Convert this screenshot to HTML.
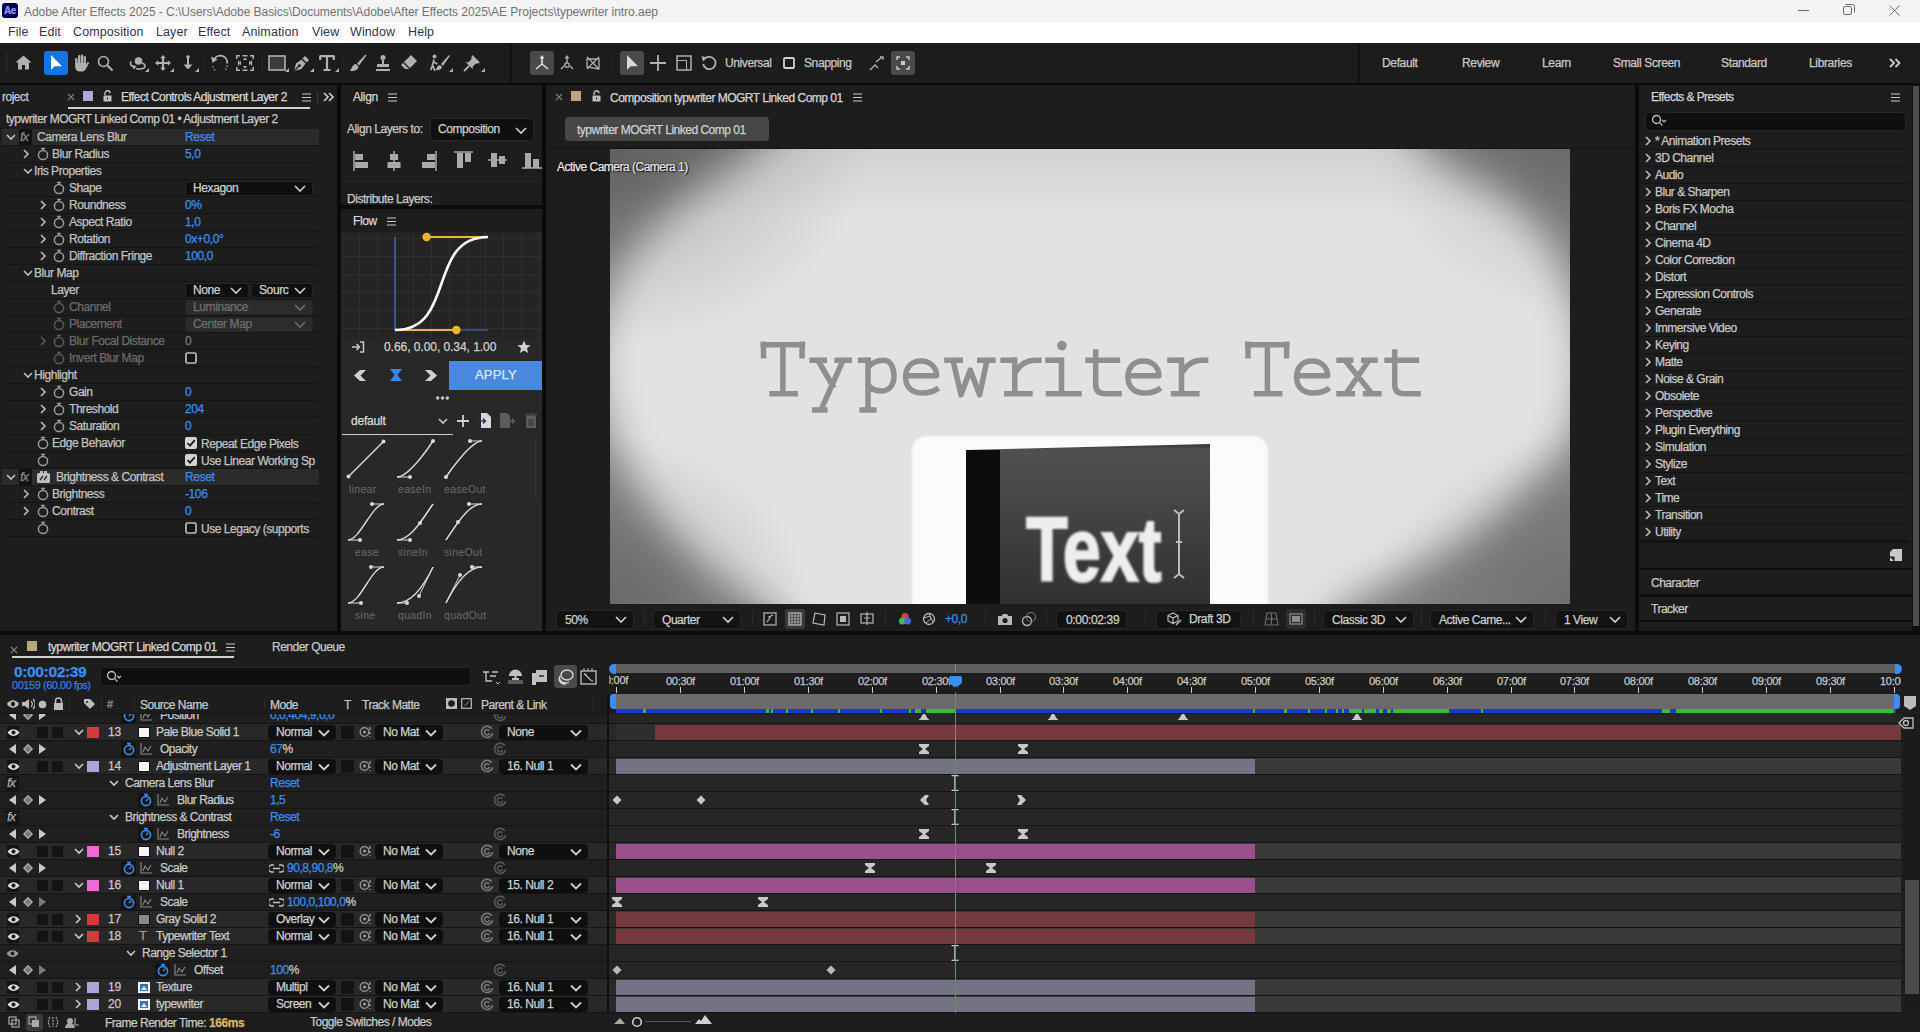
<!DOCTYPE html>
<html><head><meta charset="utf-8">
<style>
*{margin:0;padding:0;box-sizing:border-box}
html,body{width:1920px;height:1032px;overflow:hidden;background:#0b0b0b;font-family:"Liberation Sans",sans-serif;font-size:12px;color:#c4c4c4}
.a{position:absolute;display:block}
.t{position:absolute;white-space:nowrap;-webkit-text-stroke:0.25px currentColor}
</style></head><body>
<div class="a" style="left:0px;top:0px;width:1920px;height:22px;background:#f3f3f3;"></div>
<div class="a" style="left:2px;top:3px;width:16px;height:15px;background:#00005b;border-radius:3px"></div>
<div class="t" style="left:4px;top:5px;font-size:10px;line-height:12px;color:#9999ff;letter-spacing:-0.4px;font-weight:bold;">Ae</div>
<div class="t" style="left:24px;top:5px;font-size:12px;line-height:14px;color:#727272;letter-spacing:-0.04px;-webkit-text-stroke:0;">Adobe After Effects 2025 - C:\Users\Adobe Basics\Documents\Adobe\After Effects 2025\AE Projects\typewriter intro.aep</div>
<svg class="a" style="left:1798px;top:9px;" width="12" height="3" viewBox="0 0 12 3"><path d="M0 1.5H11" stroke="#6a6a6a" stroke-width="1"/></svg>
<svg class="a" style="left:1843px;top:4px;" width="12" height="12" viewBox="0 0 12 12"><rect x="0.5" y="2.5" width="8" height="8" rx="1.5" fill="none" stroke="#6a6a6a"/><path d="M2.5 0.5H9.5A2 2 0 0 1 11.5 2.5V8.5" fill="none" stroke="#6a6a6a"/></svg>
<svg class="a" style="left:1889px;top:5px;" width="11" height="11" viewBox="0 0 11 11"><path d="M0.5 0.5L10.5 10.5M10.5 0.5L0.5 10.5" stroke="#6a6a6a" stroke-width="1"/></svg>
<div class="a" style="left:0px;top:22px;width:1920px;height:21px;background:#ffffff;"></div>
<div class="t" style="left:8px;top:25px;font-size:12.5px;line-height:15px;color:#33334a;letter-spacing:0.1px;-webkit-text-stroke:0;">File</div>
<div class="t" style="left:39px;top:25px;font-size:12.5px;line-height:15px;color:#33334a;letter-spacing:0.1px;-webkit-text-stroke:0;">Edit</div>
<div class="t" style="left:73px;top:25px;font-size:12.5px;line-height:15px;color:#33334a;letter-spacing:0.1px;-webkit-text-stroke:0;">Composition</div>
<div class="t" style="left:156px;top:25px;font-size:12.5px;line-height:15px;color:#33334a;letter-spacing:0.1px;-webkit-text-stroke:0;">Layer</div>
<div class="t" style="left:198px;top:25px;font-size:12.5px;line-height:15px;color:#33334a;letter-spacing:0.1px;-webkit-text-stroke:0;">Effect</div>
<div class="t" style="left:242px;top:25px;font-size:12.5px;line-height:15px;color:#33334a;letter-spacing:0.1px;-webkit-text-stroke:0;">Animation</div>
<div class="t" style="left:312px;top:25px;font-size:12.5px;line-height:15px;color:#33334a;letter-spacing:0.1px;-webkit-text-stroke:0;">View</div>
<div class="t" style="left:350px;top:25px;font-size:12.5px;line-height:15px;color:#33334a;letter-spacing:0.1px;-webkit-text-stroke:0;">Window</div>
<div class="t" style="left:408px;top:25px;font-size:12.5px;line-height:15px;color:#33334a;letter-spacing:0.1px;-webkit-text-stroke:0;">Help</div>
<div class="a" style="left:0px;top:43px;width:1920px;height:40px;background:#1c1c1c;"></div>
<svg class="a" style="left:5px;top:52px;" width="3" height="22" viewBox="0 0 3 22"><path d="M1.5 0V22" stroke="#3a3a3a" stroke-width="1.5" stroke-dasharray="1 1"/></svg>
<svg class="a" style="left:15px;top:55px;" width="17" height="15" viewBox="0 0 17 15"><path d="M8.5 0.5L0.5 7.5H3V14.5H7V10H10V14.5H14V7.5H16.5Z" fill="#b0b0b0"/></svg>
<div class="a" style="left:44px;top:51px;width:24px;height:24px;background:#1473e6;border-radius:3px"></div>
<svg class="a" style="left:49px;top:54px;" width="14" height="17" viewBox="0 0 14 17"><path d="M2 1L2 16L5.6 12.2L13 12.2Z" fill="#ffffff"/></svg>
<svg class="a" style="left:72px;top:54px;" width="17" height="18" viewBox="0 0 17 18"><rect x="3.2" y="4" width="2.3" height="8" rx="1.15" fill="#b0b0b0"/><rect x="6" y="1" width="2.3" height="10" rx="1.15" fill="#b0b0b0"/><rect x="8.8" y="0.5" width="2.3" height="10" rx="1.15" fill="#b0b0b0"/><rect x="11.6" y="2" width="2.3" height="9" rx="1.15" fill="#b0b0b0"/><path d="M3.2 9H13.9V10.5L15.5 8A1.2 1.2 0 0 1 17 9.3L13.5 15.5C12.5 17 11.5 17.5 9.5 17.5H8C5 17.5 3.2 15.5 3.2 13Z" fill="#b0b0b0"/></svg>
<svg class="a" style="left:97px;top:55px;" width="17" height="17" viewBox="0 0 17 17"><circle cx="6.5" cy="6.5" r="5" fill="none" stroke="#b0b0b0" stroke-width="1.6"/><path d="M10.3 10.3L15.5 15.5" stroke="#b0b0b0" stroke-width="2"/></svg>
<div class="a" style="left:122px;top:54px;width:1px;height:18px;background:#242424;"></div>
<svg class="a" style="left:128px;top:55px;" width="20" height="16" viewBox="0 0 20 16"><circle cx="10.5" cy="6" r="3.8" fill="#b0b0b0"/><path d="M5.5 11.5C2 10.5 1.5 8 3.5 6.5M8 13.5C12 15 17 13.5 17 11C17 9.5 15.5 8.5 14 8" fill="none" stroke="#b0b0b0" stroke-width="1.6"/><path d="M3 10L8.5 11L6 14.5Z" fill="#b0b0b0"/></svg>
<svg class="a" style="left:145px;top:68px;" width="4" height="4" viewBox="0 0 4 4"><path d="M4 0V4H0Z" fill="#b0b0b0"/></svg>
<svg class="a" style="left:155px;top:55px;" width="16" height="16" viewBox="0 0 16 16"><path d="M8 2V14M2 8H14" stroke="#b0b0b0" stroke-width="2.2"/><path d="M8 0L5.2 3.2H10.8ZM8 16L5.2 12.8H10.8ZM0 8L3.2 5.2V10.8ZM16 8L12.8 5.2V10.8Z" fill="#b0b0b0"/></svg>
<svg class="a" style="left:170px;top:68px;" width="4" height="4" viewBox="0 0 4 4"><path d="M4 0V4H0Z" fill="#b0b0b0"/></svg>
<svg class="a" style="left:183px;top:55px;" width="10" height="16" viewBox="0 0 10 16"><circle cx="5" cy="2" r="1.8" fill="#b0b0b0"/><path d="M5 2V11" stroke="#b0b0b0" stroke-width="2"/><path d="M0.5 9.5H9.5L5 14.5Z" fill="#b0b0b0"/></svg>
<svg class="a" style="left:195px;top:68px;" width="4" height="4" viewBox="0 0 4 4"><path d="M4 0V4H0Z" fill="#b0b0b0"/></svg>
<div class="a" style="left:204px;top:54px;width:1px;height:18px;background:#242424;"></div>
<svg class="a" style="left:210px;top:54px;" width="19" height="17" viewBox="0 0 19 17"><path d="M4 5.5A7 7 0 0 1 17.2 9.5" fill="none" stroke="#b0b0b0" stroke-width="1.8"/><path d="M17 11.5A7 7 0 0 1 3 11.5" fill="none" stroke="#b0b0b0" stroke-width="1.4" stroke-dasharray="1.3 2"/><path d="M1 2.5L2.5 9L7.5 5.5Z" fill="#b0b0b0"/></svg>
<svg class="a" style="left:236px;top:55px;" width="18" height="16" viewBox="0 0 18 16"><path d="M0.8 4V0.8H4M14 0.8H17.2V4M17.2 12V15.2H14M4 15.2H0.8V12M6.5 0.8H11.5M6.5 15.2H11.5" fill="none" stroke="#b0b0b0" stroke-width="1.5"/><path d="M9 2.5L6.8 5H11.2ZM9 13.5L6.8 11H11.2ZM2.5 8L5 5.8V10.2ZM15.5 8L13 5.8V10.2Z" fill="#b0b0b0"/><path d="M2.5 5.5V10.5M15.5 5.5V10.5" stroke="#b0b0b0" stroke-width="1.2"/></svg>
<div class="a" style="left:262px;top:54px;width:1px;height:18px;background:#242424;"></div>
<svg class="a" style="left:268px;top:55px;" width="18" height="16" viewBox="0 0 18 16"><rect x="1" y="1" width="16" height="14" fill="#3a3a3a" stroke="#b0b0b0" stroke-width="1.6"/></svg>
<svg class="a" style="left:285px;top:68px;" width="4" height="4" viewBox="0 0 4 4"><path d="M4 0V4H0Z" fill="#b0b0b0"/></svg>
<svg class="a" style="left:293px;top:54px;" width="18" height="18" viewBox="0 0 18 18"><path d="M1 17L3 9.5L8.5 5.5L12.5 9.5L8.5 15Z" fill="#b0b0b0"/><path d="M9.5 4.5L12 2L16 6L13.5 8.5Z" fill="#b0b0b0"/><path d="M1.5 16.5L6 12" stroke="#1c1c1c" stroke-width="1.2"/><circle cx="6.5" cy="11.5" r="1.3" fill="#1c1c1c"/></svg>
<svg class="a" style="left:310px;top:68px;" width="4" height="4" viewBox="0 0 4 4"><path d="M4 0V4H0Z" fill="#b0b0b0"/></svg>
<svg class="a" style="left:319px;top:55px;" width="16" height="16" viewBox="0 0 16 16"><path d="M1 1.2H15M1.2 0.5V5M14.8 0.5V5M8 1V15M4.5 15H11.5" fill="none" stroke="#b0b0b0" stroke-width="2.2"/></svg>
<svg class="a" style="left:335px;top:68px;" width="4" height="4" viewBox="0 0 4 4"><path d="M4 0V4H0Z" fill="#b0b0b0"/></svg>
<div class="a" style="left:343px;top:54px;width:1px;height:18px;background:#242424;"></div>
<svg class="a" style="left:349px;top:54px;" width="18" height="18" viewBox="0 0 18 18"><path d="M16.5 0.5L8 9.5L10 11.5L17.5 1.5Z" fill="#b0b0b0"/><path d="M7 10C3.5 10 3 14 1 17C5 17.5 9.5 16 9.5 12.5Z" fill="#b0b0b0"/></svg>
<svg class="a" style="left:374px;top:54px;" width="18" height="18" viewBox="0 0 18 18"><circle cx="9" cy="3.5" r="2.5" fill="#b0b0b0"/><path d="M8 6H10V10H15V13H3V10H8Z M2 15H16V17H2Z" fill="#b0b0b0"/></svg>
<svg class="a" style="left:400px;top:54px;" width="18" height="18" viewBox="0 0 18 18"><path d="M11 1L17 7L9 15H5L1 11Z" fill="#b0b0b0"/><path d="M3.5 8.5L9.5 14.5" stroke="#1c1c1c" stroke-width="1.2"/></svg>
<div class="a" style="left:427px;top:54px;width:1px;height:18px;background:#242424;"></div>
<svg class="a" style="left:430px;top:54px;" width="20" height="18" viewBox="0 0 20 18"><circle cx="4.5" cy="2.5" r="2" fill="#b0b0b0"/><path d="M4 5.5L2.5 11L5 17M3.5 8L7.5 10M3 11L0.5 16" stroke="#b0b0b0" stroke-width="1.7" fill="none"/><path d="M19 1L11 10L13 12L19.8 2Z" fill="#b0b0b0"/><path d="M10 11C7.5 11 7 14 5.5 16C8.5 16.5 12 15.5 12 13Z" fill="#b0b0b0"/></svg>
<svg class="a" style="left:449px;top:68px;" width="4" height="4" viewBox="0 0 4 4"><path d="M4 0V4H0Z" fill="#b0b0b0"/></svg>
<svg class="a" style="left:463px;top:54px;" width="18" height="18" viewBox="0 0 18 18"><path d="M9.5 1L17 8.5L15 9.5L12.5 9.8L9.5 13L10 15.5L2.5 8L5 8.5L8.2 5.5L8.5 3Z" fill="#b0b0b0"/><path d="M6 12L1 17" stroke="#b0b0b0" stroke-width="2"/></svg>
<svg class="a" style="left:481px;top:68px;" width="4" height="4" viewBox="0 0 4 4"><path d="M4 0V4H0Z" fill="#b0b0b0"/></svg>
<div class="a" style="left:510px;top:43px;width:2px;height:40px;background:#121212;"></div>
<div class="a" style="left:530px;top:51px;width:24px;height:24px;background:#4a4a4a;border-radius:3px"></div>
<svg class="a" style="left:534px;top:55px;" width="16" height="16" viewBox="0 0 16 16"><path d="M8 2V9L2 14M8 9L14 14" stroke="#e0e0e0" stroke-width="1.6" fill="none"/><path d="M8 0L5.5 3.5H10.5Z" fill="#e0e0e0"/></svg>
<svg class="a" style="left:559px;top:55px;" width="16" height="16" viewBox="0 0 16 16"><path d="M8 2V8M5 11L2 14M11 11L14 14" stroke="#b0b0b0" stroke-width="1.4" fill="none"/><circle cx="8" cy="10" r="2.2" fill="none" stroke="#b0b0b0" stroke-width="1.3"/><path d="M8 0L5.5 3.5H10.5Z" fill="#b0b0b0"/></svg>
<svg class="a" style="left:585px;top:55px;" width="16" height="16" viewBox="0 0 16 16"><path d="M2 2L14 14M2 14L14 2M2 4V12L14 14V4Z" stroke="#b0b0b0" stroke-width="1.3" fill="none"/></svg>
<div class="a" style="left:612px;top:54px;width:1px;height:18px;background:#242424;"></div>
<div class="a" style="left:620px;top:51px;width:24px;height:24px;background:#4a4a4a;border-radius:3px"></div>
<svg class="a" style="left:625px;top:54px;" width="14" height="17" viewBox="0 0 14 17"><path d="M2 1L2 16L5.6 12.2L13 12.2Z" fill="#d8d8d8"/></svg>
<svg class="a" style="left:650px;top:55px;" width="16" height="16" viewBox="0 0 16 16"><path d="M8 0V16M0 8H16" stroke="#b0b0b0" stroke-width="1.8"/></svg>
<svg class="a" style="left:676px;top:55px;" width="16" height="16" viewBox="0 0 16 16"><rect x="1" y="1" width="14" height="14" fill="none" stroke="#b0b0b0" stroke-width="1.5"/><path d="M1 5.5H10.5V15" fill="none" stroke="#b0b0b0" stroke-width="1"/></svg>
<svg class="a" style="left:701px;top:55px;" width="16" height="16" viewBox="0 0 16 16"><path d="M4 3.5A6.2 6.2 0 1 1 2.2 9" fill="none" stroke="#b0b0b0" stroke-width="1.8"/><path d="M0.5 1L6 2.5L2 6.5Z" fill="#b0b0b0"/></svg>
<div class="t" style="left:725px;top:56px;font-size:12px;line-height:14px;color:#c8c8c8;letter-spacing:-0.4px;">Universal</div>
<div class="a" style="left:777px;top:54px;width:1px;height:18px;background:#242424;"></div>
<svg class="a" style="left:783px;top:57px;" width="12" height="12" viewBox="0 0 12 12"><rect x="1" y="1" width="10" height="10" rx="1" fill="none" stroke="#d0d0d0" stroke-width="1.8"/></svg>
<div class="t" style="left:804px;top:56px;font-size:12px;line-height:14px;color:#c8c8c8;letter-spacing:-0.4px;">Snapping</div>
<svg class="a" style="left:869px;top:56px;" width="15" height="15" viewBox="0 0 15 15"><path d="M1 14L6 9L9 12" fill="none" stroke="#b0b0b0" stroke-width="1.4"/><path d="M7 6L13 1M11 1H14V4" fill="none" stroke="#b0b0b0" stroke-width="1.4"/></svg>
<div class="a" style="left:891px;top:51px;width:24px;height:24px;background:#4a4a4a;border-radius:3px"></div>
<svg class="a" style="left:896px;top:56px;" width="14" height="14" viewBox="0 0 14 14"><path d="M1 4V1H4M10 1H13V4M13 10V13H10M4 13H1V10" fill="none" stroke="#c8c8c8" stroke-width="1.5"/><rect x="5" y="5" width="4" height="4" fill="#c8c8c8"/></svg>
<div class="a" style="left:1358px;top:43px;width:2px;height:40px;background:#121212;"></div>
<div class="t" style="left:1382px;top:56px;font-size:12px;line-height:14px;color:#c9c9c9;letter-spacing:-0.35px;">Default</div>
<div class="t" style="left:1462px;top:56px;font-size:12px;line-height:14px;color:#c9c9c9;letter-spacing:-0.35px;">Review</div>
<div class="t" style="left:1542px;top:56px;font-size:12px;line-height:14px;color:#c9c9c9;letter-spacing:-0.35px;">Learn</div>
<div class="t" style="left:1613px;top:56px;font-size:12px;line-height:14px;color:#c9c9c9;letter-spacing:-0.35px;">Small Screen</div>
<div class="t" style="left:1721px;top:56px;font-size:12px;line-height:14px;color:#c9c9c9;letter-spacing:-0.35px;">Standard</div>
<div class="t" style="left:1809px;top:56px;font-size:12px;line-height:14px;color:#c9c9c9;letter-spacing:-0.35px;">Libraries</div>
<svg class="a" style="left:1889px;top:58px;" width="12" height="10" viewBox="0 0 12 10"><path d="M1 1L5 5L1 9M6.5 1L10.5 5L6.5 9" fill="none" stroke="#c9c9c9" stroke-width="1.8"/></svg>
<div class="a" style="left:0px;top:85px;width:337px;height:546px;background:#1d1d1d;"></div>
<div class="t" style="left:2px;top:90px;font-size:12px;line-height:14px;color:#c8c8c8;letter-spacing:-0.5px;">roject</div>
<svg class="a" style="left:67px;top:93px;" width="8" height="8" viewBox="0 0 8 8"><path d="M1 1L7 7M7 1L1 7" stroke="#7a7a7a" stroke-width="1.3"/></svg>
<div class="a" style="left:83px;top:91px;width:10px;height:10px;background:#aaaad8;"></div>
<svg class="a" style="left:103px;top:90px;" width="9" height="12" viewBox="0 0 9 12"><path d="M2 5V3.2A2.5 2.5 0 0 1 7 3.2" fill="none" stroke="#bdbdbd" stroke-width="1.4"/><rect x="0.5" y="5.5" width="8" height="6" fill="#bdbdbd"/><rect x="4" y="7.5" width="1" height="2" fill="#1d1d1d"/></svg>
<div class="t" style="left:121px;top:90px;font-size:12px;line-height:14px;color:#d6d6d6;letter-spacing:-0.55px;">Effect Controls Adjustment Layer 2</div>
<svg class="a" style="left:302px;top:93px;" width="9" height="9" viewBox="0 0 9 9"><path d="M0 1H9M0 4.5H9M0 8H9" stroke="#c8c8c8" stroke-width="1.1"/></svg>
<div class="a" style="left:68px;top:107px;width:242px;height:2px;background:#d0d0d0;"></div>
<div class="a" style="left:317px;top:92px;width:1px;height:12px;background:#3a3a3a;"></div>
<svg class="a" style="left:323px;top:92px;" width="11" height="10" viewBox="0 0 11 10"><path d="M1 1L5 5L1 9M6 1L10 5L6 9" fill="none" stroke="#c9c9c9" stroke-width="1.7"/></svg>
<div class="t" style="left:6px;top:112px;font-size:12px;line-height:14px;color:#c8c8c8;letter-spacing:-0.5px;">typwriter MOGRT Linked Comp 01 • Adjustment Layer 2</div>
<div class="a" style="left:2px;top:129px;width:317px;height:17px;background:#2b2b2b;"></div>
<div class="a" style="left:2px;top:145px;width:317px;height:1px;background:#151515;"></div>
<svg class="a" style="left:6px;top:133px;" width="10" height="8" viewBox="0 0 10 8"><path d="M1 2 L5 6 L9 2" fill="none" stroke="#bdbdbd" stroke-width="1.6"/></svg>
<div class="a" style="left:19px;top:129px;width:13px;height:16px;background:#121212;"></div>
<div class="t" style="left:20px;top:129px;font-size:13px;line-height:16px;color:#8a8a8a;letter-spacing:-1px;font-family:"Liberation Serif",serif;"><i>fx</i></div>
<div class="t" style="left:37px;top:130px;font-size:12px;line-height:14px;color:#c2c2c2;letter-spacing:-0.45px;">Camera Lens Blur</div>
<div class="t" style="left:185px;top:130px;font-size:12px;line-height:14px;color:#3a8ef0;letter-spacing:-0.4px;">Reset</div>
<div class="a" style="left:2px;top:146px;width:317px;height:17px;background:#1d1d1d;"></div>
<div class="a" style="left:2px;top:162px;width:317px;height:1px;background:#151515;"></div>
<svg class="a" style="left:22px;top:149px;" width="8" height="10" viewBox="0 0 8 10"><path d="M2 1 L6 5 L2 9" fill="none" stroke="#bdbdbd" stroke-width="1.6"/></svg>
<svg class="a" style="left:37px;top:147px;" width="12" height="14" viewBox="0 0 12 14"><circle cx="6" cy="8" r="4.6" fill="none" stroke="#9a9a9a" stroke-width="1.5"/><path d="M4 1.5H8M6 1.5V3.2" stroke="#9a9a9a" stroke-width="1.4"/></svg>
<div class="t" style="left:52px;top:147px;font-size:12px;line-height:14px;color:#c2c2c2;letter-spacing:-0.45px;">Blur Radius</div>
<div class="t" style="left:185px;top:147px;font-size:12px;line-height:14px;color:#3a8ef0;letter-spacing:-0.4px;">5,0</div>
<div class="a" style="left:2px;top:163px;width:317px;height:17px;background:#1d1d1d;"></div>
<div class="a" style="left:2px;top:179px;width:317px;height:1px;background:#151515;"></div>
<svg class="a" style="left:23px;top:167px;" width="10" height="8" viewBox="0 0 10 8"><path d="M1 2 L5 6 L9 2" fill="none" stroke="#bdbdbd" stroke-width="1.6"/></svg>
<div class="t" style="left:34px;top:164px;font-size:12px;line-height:14px;color:#c2c2c2;letter-spacing:-0.45px;">Iris Properties</div>
<div class="a" style="left:2px;top:180px;width:317px;height:17px;background:#1d1d1d;"></div>
<div class="a" style="left:2px;top:196px;width:317px;height:1px;background:#151515;"></div>
<div class="a" style="left:44px;top:188px;width:1px;height:1px;background:#3a3a3a;"></div>
<svg class="a" style="left:53px;top:181px;" width="12" height="14" viewBox="0 0 12 14"><circle cx="6" cy="8" r="4.6" fill="none" stroke="#9a9a9a" stroke-width="1.5"/><path d="M4 1.5H8M6 1.5V3.2" stroke="#9a9a9a" stroke-width="1.4"/></svg>
<div class="t" style="left:69px;top:181px;font-size:12px;line-height:14px;color:#c2c2c2;letter-spacing:-0.45px;">Shape</div>
<div class="a" style="left:185px;top:181px;width:128px;height:15px;background:#0f0f0f;border-radius:3px;border:1px solid #262626"></div>
<div class="t" style="left:193px;top:181px;font-size:12px;line-height:14px;color:#d0d0d0;letter-spacing:-0.4px;">Hexagon</div>
<svg class="a" style="left:294px;top:184px;" width="12" height="9" viewBox="0 0 12 9"><path d="M1 2 L6 7 L11 2" fill="none" stroke="#cfcfcf" stroke-width="1.6"/></svg>
<div class="a" style="left:2px;top:197px;width:317px;height:17px;background:#1d1d1d;"></div>
<div class="a" style="left:2px;top:213px;width:317px;height:1px;background:#151515;"></div>
<svg class="a" style="left:39px;top:200px;" width="8" height="10" viewBox="0 0 8 10"><path d="M2 1 L6 5 L2 9" fill="none" stroke="#bdbdbd" stroke-width="1.6"/></svg>
<svg class="a" style="left:53px;top:198px;" width="12" height="14" viewBox="0 0 12 14"><circle cx="6" cy="8" r="4.6" fill="none" stroke="#9a9a9a" stroke-width="1.5"/><path d="M4 1.5H8M6 1.5V3.2" stroke="#9a9a9a" stroke-width="1.4"/></svg>
<div class="t" style="left:69px;top:198px;font-size:12px;line-height:14px;color:#c2c2c2;letter-spacing:-0.45px;">Roundness</div>
<div class="t" style="left:185px;top:198px;font-size:12px;line-height:14px;color:#3a8ef0;letter-spacing:-0.4px;">0%</div>
<div class="a" style="left:2px;top:214px;width:317px;height:17px;background:#1d1d1d;"></div>
<div class="a" style="left:2px;top:230px;width:317px;height:1px;background:#151515;"></div>
<svg class="a" style="left:39px;top:217px;" width="8" height="10" viewBox="0 0 8 10"><path d="M2 1 L6 5 L2 9" fill="none" stroke="#bdbdbd" stroke-width="1.6"/></svg>
<svg class="a" style="left:53px;top:215px;" width="12" height="14" viewBox="0 0 12 14"><circle cx="6" cy="8" r="4.6" fill="none" stroke="#9a9a9a" stroke-width="1.5"/><path d="M4 1.5H8M6 1.5V3.2" stroke="#9a9a9a" stroke-width="1.4"/></svg>
<div class="t" style="left:69px;top:215px;font-size:12px;line-height:14px;color:#c2c2c2;letter-spacing:-0.45px;">Aspect Ratio</div>
<div class="t" style="left:185px;top:215px;font-size:12px;line-height:14px;color:#3a8ef0;letter-spacing:-0.4px;">1,0</div>
<div class="a" style="left:2px;top:231px;width:317px;height:17px;background:#1d1d1d;"></div>
<div class="a" style="left:2px;top:247px;width:317px;height:1px;background:#151515;"></div>
<svg class="a" style="left:39px;top:234px;" width="8" height="10" viewBox="0 0 8 10"><path d="M2 1 L6 5 L2 9" fill="none" stroke="#bdbdbd" stroke-width="1.6"/></svg>
<svg class="a" style="left:53px;top:232px;" width="12" height="14" viewBox="0 0 12 14"><circle cx="6" cy="8" r="4.6" fill="none" stroke="#9a9a9a" stroke-width="1.5"/><path d="M4 1.5H8M6 1.5V3.2" stroke="#9a9a9a" stroke-width="1.4"/></svg>
<div class="t" style="left:69px;top:232px;font-size:12px;line-height:14px;color:#c2c2c2;letter-spacing:-0.45px;">Rotation</div>
<div class="t" style="left:185px;top:232px;font-size:12px;line-height:14px;color:#3a8ef0;letter-spacing:-0.4px;">0x+0,0°</div>
<div class="a" style="left:2px;top:248px;width:317px;height:17px;background:#1d1d1d;"></div>
<div class="a" style="left:2px;top:264px;width:317px;height:1px;background:#151515;"></div>
<svg class="a" style="left:39px;top:251px;" width="8" height="10" viewBox="0 0 8 10"><path d="M2 1 L6 5 L2 9" fill="none" stroke="#bdbdbd" stroke-width="1.6"/></svg>
<svg class="a" style="left:53px;top:249px;" width="12" height="14" viewBox="0 0 12 14"><circle cx="6" cy="8" r="4.6" fill="none" stroke="#9a9a9a" stroke-width="1.5"/><path d="M4 1.5H8M6 1.5V3.2" stroke="#9a9a9a" stroke-width="1.4"/></svg>
<div class="t" style="left:69px;top:249px;font-size:12px;line-height:14px;color:#c2c2c2;letter-spacing:-0.45px;">Diffraction Fringe</div>
<div class="t" style="left:185px;top:249px;font-size:12px;line-height:14px;color:#3a8ef0;letter-spacing:-0.4px;">100,0</div>
<div class="a" style="left:2px;top:265px;width:317px;height:17px;background:#1d1d1d;"></div>
<div class="a" style="left:2px;top:281px;width:317px;height:1px;background:#151515;"></div>
<svg class="a" style="left:23px;top:269px;" width="10" height="8" viewBox="0 0 10 8"><path d="M1 2 L5 6 L9 2" fill="none" stroke="#bdbdbd" stroke-width="1.6"/></svg>
<div class="t" style="left:34px;top:266px;font-size:12px;line-height:14px;color:#c2c2c2;letter-spacing:-0.45px;">Blur Map</div>
<div class="a" style="left:2px;top:282px;width:317px;height:17px;background:#1d1d1d;"></div>
<div class="a" style="left:2px;top:298px;width:317px;height:1px;background:#151515;"></div>
<div class="a" style="left:44px;top:290px;width:1px;height:1px;background:#3a3a3a;"></div>
<div class="t" style="left:51px;top:283px;font-size:12px;line-height:14px;color:#c2c2c2;letter-spacing:-0.45px;">Layer</div>
<div class="a" style="left:185px;top:283px;width:64px;height:15px;background:#0f0f0f;border-radius:3px;border:1px solid #262626"></div>
<div class="t" style="left:193px;top:283px;font-size:12px;line-height:14px;color:#d0d0d0;letter-spacing:-0.4px;">None</div>
<svg class="a" style="left:230px;top:286px;" width="12" height="9" viewBox="0 0 12 9"><path d="M1 2 L6 7 L11 2" fill="none" stroke="#cfcfcf" stroke-width="1.6"/></svg>
<div class="a" style="left:251px;top:283px;width:62px;height:15px;background:#0f0f0f;border-radius:3px;border:1px solid #262626"></div>
<div class="t" style="left:259px;top:283px;font-size:12px;line-height:14px;color:#d0d0d0;letter-spacing:-0.4px;">Sourc</div>
<svg class="a" style="left:294px;top:286px;" width="12" height="9" viewBox="0 0 12 9"><path d="M1 2 L6 7 L11 2" fill="none" stroke="#cfcfcf" stroke-width="1.6"/></svg>
<div class="a" style="left:2px;top:299px;width:317px;height:17px;background:#1d1d1d;"></div>
<div class="a" style="left:2px;top:315px;width:317px;height:1px;background:#151515;"></div>
<div class="a" style="left:44px;top:307px;width:1px;height:1px;background:#3a3a3a;"></div>
<svg class="a" style="left:53px;top:300px;" width="12" height="14" viewBox="0 0 12 14"><circle cx="6" cy="8" r="4.6" fill="none" stroke="#5a5a5a" stroke-width="1.5"/><path d="M4 1.5H8M6 1.5V3.2" stroke="#5a5a5a" stroke-width="1.4"/></svg>
<div class="t" style="left:69px;top:300px;font-size:12px;line-height:14px;color:#6b6b6b;letter-spacing:-0.45px;">Channel</div>
<div class="a" style="left:185px;top:300px;width:128px;height:15px;background:#2c2c2c;border-radius:3px;border:1px solid #262626"></div>
<div class="t" style="left:193px;top:300px;font-size:12px;line-height:14px;color:#6e6e6e;letter-spacing:-0.4px;">Luminance</div>
<svg class="a" style="left:294px;top:303px;" width="12" height="9" viewBox="0 0 12 9"><path d="M1 2 L6 7 L11 2" fill="none" stroke="#6a6a6a" stroke-width="1.6"/></svg>
<div class="a" style="left:2px;top:316px;width:317px;height:17px;background:#1d1d1d;"></div>
<div class="a" style="left:2px;top:332px;width:317px;height:1px;background:#151515;"></div>
<div class="a" style="left:44px;top:324px;width:1px;height:1px;background:#3a3a3a;"></div>
<svg class="a" style="left:53px;top:317px;" width="12" height="14" viewBox="0 0 12 14"><circle cx="6" cy="8" r="4.6" fill="none" stroke="#5a5a5a" stroke-width="1.5"/><path d="M4 1.5H8M6 1.5V3.2" stroke="#5a5a5a" stroke-width="1.4"/></svg>
<div class="t" style="left:69px;top:317px;font-size:12px;line-height:14px;color:#6b6b6b;letter-spacing:-0.45px;">Placement</div>
<div class="a" style="left:185px;top:317px;width:128px;height:15px;background:#2c2c2c;border-radius:3px;border:1px solid #262626"></div>
<div class="t" style="left:193px;top:317px;font-size:12px;line-height:14px;color:#6e6e6e;letter-spacing:-0.4px;">Center Map</div>
<svg class="a" style="left:294px;top:320px;" width="12" height="9" viewBox="0 0 12 9"><path d="M1 2 L6 7 L11 2" fill="none" stroke="#6a6a6a" stroke-width="1.6"/></svg>
<div class="a" style="left:2px;top:333px;width:317px;height:17px;background:#1d1d1d;"></div>
<div class="a" style="left:2px;top:349px;width:317px;height:1px;background:#151515;"></div>
<svg class="a" style="left:39px;top:336px;" width="8" height="10" viewBox="0 0 8 10"><path d="M2 1 L6 5 L2 9" fill="none" stroke="#5a5a5a" stroke-width="1.6"/></svg>
<svg class="a" style="left:53px;top:334px;" width="12" height="14" viewBox="0 0 12 14"><circle cx="6" cy="8" r="4.6" fill="none" stroke="#5a5a5a" stroke-width="1.5"/><path d="M4 1.5H8M6 1.5V3.2" stroke="#5a5a5a" stroke-width="1.4"/></svg>
<div class="t" style="left:69px;top:334px;font-size:12px;line-height:14px;color:#6b6b6b;letter-spacing:-0.45px;">Blur Focal Distance</div>
<div class="t" style="left:185px;top:334px;font-size:12px;line-height:14px;color:#7a7a7a;letter-spacing:-0.4px;">0</div>
<div class="a" style="left:2px;top:350px;width:317px;height:17px;background:#1d1d1d;"></div>
<div class="a" style="left:2px;top:366px;width:317px;height:1px;background:#151515;"></div>
<div class="a" style="left:44px;top:358px;width:1px;height:1px;background:#3a3a3a;"></div>
<svg class="a" style="left:53px;top:351px;" width="12" height="14" viewBox="0 0 12 14"><circle cx="6" cy="8" r="4.6" fill="none" stroke="#5a5a5a" stroke-width="1.5"/><path d="M4 1.5H8M6 1.5V3.2" stroke="#5a5a5a" stroke-width="1.4"/></svg>
<div class="t" style="left:69px;top:351px;font-size:12px;line-height:14px;color:#6b6b6b;letter-spacing:-0.45px;">Invert Blur Map</div>
<svg class="a" style="left:185px;top:352px;" width="12" height="12" viewBox="0 0 12 12"><rect x="1" y="1" width="10" height="10" rx="1.5" fill="#141414" stroke="#bdbdbd" stroke-width="1.7"/></svg>
<div class="a" style="left:2px;top:367px;width:317px;height:17px;background:#1d1d1d;"></div>
<div class="a" style="left:2px;top:383px;width:317px;height:1px;background:#151515;"></div>
<svg class="a" style="left:23px;top:371px;" width="10" height="8" viewBox="0 0 10 8"><path d="M1 2 L5 6 L9 2" fill="none" stroke="#bdbdbd" stroke-width="1.6"/></svg>
<div class="t" style="left:34px;top:368px;font-size:12px;line-height:14px;color:#c2c2c2;letter-spacing:-0.45px;">Highlight</div>
<div class="a" style="left:2px;top:384px;width:317px;height:17px;background:#1d1d1d;"></div>
<div class="a" style="left:2px;top:400px;width:317px;height:1px;background:#151515;"></div>
<svg class="a" style="left:39px;top:387px;" width="8" height="10" viewBox="0 0 8 10"><path d="M2 1 L6 5 L2 9" fill="none" stroke="#bdbdbd" stroke-width="1.6"/></svg>
<svg class="a" style="left:53px;top:385px;" width="12" height="14" viewBox="0 0 12 14"><circle cx="6" cy="8" r="4.6" fill="none" stroke="#9a9a9a" stroke-width="1.5"/><path d="M4 1.5H8M6 1.5V3.2" stroke="#9a9a9a" stroke-width="1.4"/></svg>
<div class="t" style="left:69px;top:385px;font-size:12px;line-height:14px;color:#c2c2c2;letter-spacing:-0.45px;">Gain</div>
<div class="t" style="left:185px;top:385px;font-size:12px;line-height:14px;color:#3a8ef0;letter-spacing:-0.4px;">0</div>
<div class="a" style="left:2px;top:401px;width:317px;height:17px;background:#1d1d1d;"></div>
<div class="a" style="left:2px;top:417px;width:317px;height:1px;background:#151515;"></div>
<svg class="a" style="left:39px;top:404px;" width="8" height="10" viewBox="0 0 8 10"><path d="M2 1 L6 5 L2 9" fill="none" stroke="#bdbdbd" stroke-width="1.6"/></svg>
<svg class="a" style="left:53px;top:402px;" width="12" height="14" viewBox="0 0 12 14"><circle cx="6" cy="8" r="4.6" fill="none" stroke="#9a9a9a" stroke-width="1.5"/><path d="M4 1.5H8M6 1.5V3.2" stroke="#9a9a9a" stroke-width="1.4"/></svg>
<div class="t" style="left:69px;top:402px;font-size:12px;line-height:14px;color:#c2c2c2;letter-spacing:-0.45px;">Threshold</div>
<div class="t" style="left:185px;top:402px;font-size:12px;line-height:14px;color:#3a8ef0;letter-spacing:-0.4px;">204</div>
<div class="a" style="left:2px;top:418px;width:317px;height:17px;background:#1d1d1d;"></div>
<div class="a" style="left:2px;top:434px;width:317px;height:1px;background:#151515;"></div>
<svg class="a" style="left:39px;top:421px;" width="8" height="10" viewBox="0 0 8 10"><path d="M2 1 L6 5 L2 9" fill="none" stroke="#bdbdbd" stroke-width="1.6"/></svg>
<svg class="a" style="left:53px;top:419px;" width="12" height="14" viewBox="0 0 12 14"><circle cx="6" cy="8" r="4.6" fill="none" stroke="#9a9a9a" stroke-width="1.5"/><path d="M4 1.5H8M6 1.5V3.2" stroke="#9a9a9a" stroke-width="1.4"/></svg>
<div class="t" style="left:69px;top:419px;font-size:12px;line-height:14px;color:#c2c2c2;letter-spacing:-0.45px;">Saturation</div>
<div class="t" style="left:185px;top:419px;font-size:12px;line-height:14px;color:#3a8ef0;letter-spacing:-0.4px;">0</div>
<div class="a" style="left:2px;top:435px;width:317px;height:17px;background:#1d1d1d;"></div>
<div class="a" style="left:2px;top:451px;width:317px;height:1px;background:#151515;"></div>
<div class="a" style="left:27px;top:443px;width:1px;height:1px;background:#3a3a3a;"></div>
<svg class="a" style="left:37px;top:436px;" width="12" height="14" viewBox="0 0 12 14"><circle cx="6" cy="8" r="4.6" fill="none" stroke="#9a9a9a" stroke-width="1.5"/><path d="M4 1.5H8M6 1.5V3.2" stroke="#9a9a9a" stroke-width="1.4"/></svg>
<div class="t" style="left:52px;top:436px;font-size:12px;line-height:14px;color:#c2c2c2;letter-spacing:-0.45px;">Edge Behavior</div>
<svg class="a" style="left:185px;top:437px;" width="12" height="12" viewBox="0 0 12 12"><rect x="0" y="0" width="12" height="12" rx="2" fill="#d2d2d2"/><path d="M2.5 6.2L5 8.7L9.8 3.2" fill="none" stroke="#1d1d1d" stroke-width="1.8"/></svg>
<div class="t" style="left:201px;top:437px;font-size:12px;line-height:14px;color:#c2c2c2;letter-spacing:-0.45px;">Repeat Edge Pixels</div>
<div class="a" style="left:2px;top:452px;width:317px;height:17px;background:#1d1d1d;"></div>
<div class="a" style="left:2px;top:468px;width:317px;height:1px;background:#151515;"></div>
<div class="a" style="left:27px;top:460px;width:1px;height:1px;background:#3a3a3a;"></div>
<svg class="a" style="left:37px;top:453px;" width="12" height="14" viewBox="0 0 12 14"><circle cx="6" cy="8" r="4.6" fill="none" stroke="#9a9a9a" stroke-width="1.5"/><path d="M4 1.5H8M6 1.5V3.2" stroke="#9a9a9a" stroke-width="1.4"/></svg>
<svg class="a" style="left:185px;top:454px;" width="12" height="12" viewBox="0 0 12 12"><rect x="0" y="0" width="12" height="12" rx="2" fill="#d2d2d2"/><path d="M2.5 6.2L5 8.7L9.8 3.2" fill="none" stroke="#1d1d1d" stroke-width="1.8"/></svg>
<div class="t" style="left:201px;top:454px;font-size:12px;line-height:14px;color:#c2c2c2;letter-spacing:-0.45px;">Use Linear Working Sp</div>
<div class="a" style="left:2px;top:469px;width:317px;height:17px;background:#2b2b2b;"></div>
<div class="a" style="left:2px;top:485px;width:317px;height:1px;background:#151515;"></div>
<svg class="a" style="left:6px;top:473px;" width="10" height="8" viewBox="0 0 10 8"><path d="M1 2 L5 6 L9 2" fill="none" stroke="#bdbdbd" stroke-width="1.6"/></svg>
<div class="a" style="left:19px;top:469px;width:13px;height:16px;background:#121212;"></div>
<div class="t" style="left:20px;top:469px;font-size:13px;line-height:16px;color:#8a8a8a;letter-spacing:-1px;font-family:"Liberation Serif",serif;"><i>fx</i></div>
<svg class="a" style="left:37px;top:471px;" width="13" height="12" viewBox="0 0 13 12"><rect x="0" y="2" width="13" height="10" rx="1.5" fill="#bdbdbd"/><rect x="3" y="0" width="3" height="3" fill="#bdbdbd"/><rect x="7" y="0" width="3" height="3" fill="#bdbdbd"/><path d="M3 9L6 5M7 9L10 5" stroke="#2b2b2b" stroke-width="1.3"/></svg>
<div class="t" style="left:56px;top:470px;font-size:12px;line-height:14px;color:#c2c2c2;letter-spacing:-0.45px;">Brightness &amp; Contrast</div>
<div class="t" style="left:185px;top:470px;font-size:12px;line-height:14px;color:#3a8ef0;letter-spacing:-0.4px;">Reset</div>
<div class="a" style="left:2px;top:486px;width:317px;height:17px;background:#1d1d1d;"></div>
<div class="a" style="left:2px;top:502px;width:317px;height:1px;background:#151515;"></div>
<svg class="a" style="left:22px;top:489px;" width="8" height="10" viewBox="0 0 8 10"><path d="M2 1 L6 5 L2 9" fill="none" stroke="#bdbdbd" stroke-width="1.6"/></svg>
<svg class="a" style="left:37px;top:487px;" width="12" height="14" viewBox="0 0 12 14"><circle cx="6" cy="8" r="4.6" fill="none" stroke="#9a9a9a" stroke-width="1.5"/><path d="M4 1.5H8M6 1.5V3.2" stroke="#9a9a9a" stroke-width="1.4"/></svg>
<div class="t" style="left:52px;top:487px;font-size:12px;line-height:14px;color:#c2c2c2;letter-spacing:-0.45px;">Brightness</div>
<div class="t" style="left:185px;top:487px;font-size:12px;line-height:14px;color:#3a8ef0;letter-spacing:-0.4px;">-106</div>
<div class="a" style="left:2px;top:503px;width:317px;height:17px;background:#1d1d1d;"></div>
<div class="a" style="left:2px;top:519px;width:317px;height:1px;background:#151515;"></div>
<svg class="a" style="left:22px;top:506px;" width="8" height="10" viewBox="0 0 8 10"><path d="M2 1 L6 5 L2 9" fill="none" stroke="#bdbdbd" stroke-width="1.6"/></svg>
<svg class="a" style="left:37px;top:504px;" width="12" height="14" viewBox="0 0 12 14"><circle cx="6" cy="8" r="4.6" fill="none" stroke="#9a9a9a" stroke-width="1.5"/><path d="M4 1.5H8M6 1.5V3.2" stroke="#9a9a9a" stroke-width="1.4"/></svg>
<div class="t" style="left:52px;top:504px;font-size:12px;line-height:14px;color:#c2c2c2;letter-spacing:-0.45px;">Contrast</div>
<div class="t" style="left:185px;top:504px;font-size:12px;line-height:14px;color:#3a8ef0;letter-spacing:-0.4px;">0</div>
<div class="a" style="left:2px;top:520px;width:317px;height:17px;background:#1d1d1d;"></div>
<div class="a" style="left:2px;top:536px;width:317px;height:1px;background:#151515;"></div>
<div class="a" style="left:27px;top:528px;width:1px;height:1px;background:#3a3a3a;"></div>
<svg class="a" style="left:37px;top:521px;" width="12" height="14" viewBox="0 0 12 14"><circle cx="6" cy="8" r="4.6" fill="none" stroke="#9a9a9a" stroke-width="1.5"/><path d="M4 1.5H8M6 1.5V3.2" stroke="#9a9a9a" stroke-width="1.4"/></svg>
<svg class="a" style="left:185px;top:522px;" width="12" height="12" viewBox="0 0 12 12"><rect x="1" y="1" width="10" height="10" rx="1.5" fill="#141414" stroke="#bdbdbd" stroke-width="1.7"/></svg>
<div class="t" style="left:201px;top:522px;font-size:12px;line-height:14px;color:#c2c2c2;letter-spacing:-0.45px;">Use Legacy (supports</div>
<div class="a" style="left:341px;top:85px;width:201px;height:120px;background:#1d1d1d;"></div>
<div class="t" style="left:353px;top:90px;font-size:12px;line-height:14px;color:#d6d6d6;letter-spacing:-0.4px;">Align</div>
<svg class="a" style="left:388px;top:93px;" width="9" height="9" viewBox="0 0 9 9"><path d="M0 1H9M0 4.5H9M0 8H9" stroke="#c8c8c8" stroke-width="1.1"/></svg>
<div class="t" style="left:347px;top:122px;font-size:12px;line-height:14px;color:#c8c8c8;letter-spacing:-0.45px;">Align Layers to:</div>
<div class="a" style="left:430px;top:118px;width:104px;height:23px;background:#0f0f0f;border-radius:4px;border:1px solid #262626"></div>
<div class="t" style="left:438px;top:122px;font-size:12px;line-height:14px;color:#cfcfcf;letter-spacing:-0.45px;">Composition</div>
<svg class="a" style="left:515px;top:126px;" width="12" height="9" viewBox="0 0 12 9"><path d="M1 2 L6 7 L11 2" fill="none" stroke="#cfcfcf" stroke-width="1.6"/></svg>
<svg class="a" style="left:353px;top:151px;" width="16" height="20" viewBox="0 0 16 20"><path d="M1 0V20" stroke="#a9a9a9" stroke-width="1.5"/><rect x="2" y="3" width="8" height="6" fill="#a9a9a9"/><rect x="2" y="11" width="13" height="6" fill="#a9a9a9"/></svg>
<svg class="a" style="left:386px;top:151px;" width="16" height="20" viewBox="0 0 16 20"><path d="M8 0V20" stroke="#a9a9a9" stroke-width="1.5"/><rect x="4" y="3" width="8" height="6" fill="#a9a9a9"/><rect x="1.5" y="11" width="13" height="6" fill="#a9a9a9"/></svg>
<svg class="a" style="left:421px;top:151px;" width="16" height="20" viewBox="0 0 16 20"><path d="M15 0V20" stroke="#a9a9a9" stroke-width="1.5"/><rect x="6" y="3" width="8" height="6" fill="#a9a9a9"/><rect x="1" y="11" width="13" height="6" fill="#a9a9a9"/></svg>
<svg class="a" style="left:454px;top:151px;" width="19" height="18" viewBox="0 0 19 18"><path d="M0 1H19" stroke="#a9a9a9" stroke-width="1.5"/><rect x="3" y="2" width="6" height="15" fill="#a9a9a9"/><rect x="11" y="2" width="6" height="9" fill="#a9a9a9"/></svg>
<svg class="a" style="left:488px;top:151px;" width="19" height="18" viewBox="0 0 19 18"><path d="M0 9H19" stroke="#a9a9a9" stroke-width="1.5"/><rect x="3" y="2" width="6" height="14" fill="#a9a9a9"/><rect x="11" y="5" width="6" height="8" fill="#a9a9a9"/></svg>
<svg class="a" style="left:522px;top:151px;" width="20" height="18" viewBox="0 0 20 18"><path d="M0 17H20" stroke="#a9a9a9" stroke-width="1.5"/><rect x="3" y="2" width="6" height="15" fill="#a9a9a9"/><rect x="11" y="8" width="6" height="9" fill="#a9a9a9"/></svg>
<div class="a" style="left:342px;top:181px;width:200px;height:1px;background:#262626;"></div>
<div class="t" style="left:347px;top:192px;font-size:12px;line-height:14px;color:#c8c8c8;letter-spacing:-0.45px;">Distribute Layers:</div>
<div class="a" style="left:341px;top:209px;width:201px;height:422px;background:#282828;"></div>
<div class="a" style="left:341px;top:209px;width:201px;height:23px;background:#1d1d1d;"></div>
<div class="t" style="left:353px;top:214px;font-size:12px;line-height:14px;color:#d6d6d6;letter-spacing:-0.4px;">Flow</div>
<svg class="a" style="left:387px;top:217px;" width="9" height="9" viewBox="0 0 9 9"><path d="M0 1H9M0 4.5H9M0 8H9" stroke="#c8c8c8" stroke-width="1.1"/></svg>
<svg class="a" style="left:342px;top:232px;" width="200" height="106" viewBox="0 0 200 106"><rect x="0" y="0" width="200" height="106" fill="#242424"/><path d="M17.5 0V106" stroke="#2f2f2f" stroke-width="1"/><path d="M35.5 0V106" stroke="#2f2f2f" stroke-width="1"/><path d="M53.5 0V106" stroke="#2f2f2f" stroke-width="1"/><path d="M71.5 0V106" stroke="#2f2f2f" stroke-width="1"/><path d="M89.5 0V106" stroke="#2f2f2f" stroke-width="1"/><path d="M107.5 0V106" stroke="#2f2f2f" stroke-width="1"/><path d="M125.5 0V106" stroke="#2f2f2f" stroke-width="1"/><path d="M143.5 0V106" stroke="#2f2f2f" stroke-width="1"/><path d="M161.5 0V106" stroke="#2f2f2f" stroke-width="1"/><path d="M179.5 0V106" stroke="#2f2f2f" stroke-width="1"/><path d="M197.5 0V106" stroke="#2f2f2f" stroke-width="1"/><path d="M0 6.5H200" stroke="#2f2f2f" stroke-width="1"/><path d="M0 24.5H200" stroke="#2f2f2f" stroke-width="1"/><path d="M0 42.5H200" stroke="#2f2f2f" stroke-width="1"/><path d="M0 60.5H200" stroke="#2f2f2f" stroke-width="1"/><path d="M0 78.5H200" stroke="#2f2f2f" stroke-width="1"/><path d="M0 96.5H200" stroke="#2f2f2f" stroke-width="1"/><path d="M53 5V98H146" fill="none" stroke="#3b7be0" stroke-width="1.2"/><path d="M53 98H114.38 M146 5H84.62" stroke="#f0b429" stroke-width="2"/><path d="M53 98C114.38 98 84.62 5 146 5" fill="none" stroke="#ffffff" stroke-width="2.6"/><circle cx="114.38" cy="98" r="4.2" fill="#f0b429"/><circle cx="84.62" cy="5" r="4.2" fill="#f0b429"/></svg>
<svg class="a" style="left:351px;top:341px;" width="14" height="12" viewBox="0 0 14 12"><path d="M1 6H8M5.5 3L8.5 6L5.5 9" fill="none" stroke="#c8c8c8" stroke-width="1.5"/><path d="M9 1H12.5V11H9" fill="none" stroke="#c8c8c8" stroke-width="1.5"/></svg>
<div class="t" style="left:384px;top:340px;font-size:12px;line-height:14px;color:#d0d0d0;letter-spacing:-0.05px;">0.66, 0.00, 0.34, 1.00</div>
<svg class="a" style="left:517px;top:340px;" width="14" height="14" viewBox="0 0 14 14"><path d="M7 0.5L8.9 4.9L13.5 5.2L10 8.3L11.1 13L7 10.5L2.9 13L4 8.3L0.5 5.2L5.1 4.9Z" fill="#d0d0d0"/></svg>
<svg class="a" style="left:354px;top:370px;" width="12" height="11" viewBox="0 0 12 11"><path d="M12 0H6L0 5.5L6 11H12L6.5 5.5Z" fill="#cfcfcf"/></svg>
<svg class="a" style="left:390px;top:369px;" width="12" height="12" viewBox="0 0 12 12"><path d="M0 0H12L7.5 6L12 12H0L4.5 6Z" fill="#3d86e8"/></svg>
<svg class="a" style="left:425px;top:370px;" width="12" height="11" viewBox="0 0 12 11"><path d="M0 0H6L12 5.5L6 11H0L5.5 5.5Z" fill="#cfcfcf"/></svg>
<div class="a" style="left:449px;top:361px;width:93px;height:29px;background:#4a88e0;"></div>
<div class="t" style="left:475px;top:367px;font-size:13px;line-height:16px;color:#dfe9f7;letter-spacing:0.2px;">APPLY</div>
<svg class="a" style="left:436px;top:396px;" width="13" height="4" viewBox="0 0 13 4"><circle cx="1.7" cy="2" r="1.7" fill="#c8c8c8"/><circle cx="6.5" cy="2" r="1.7" fill="#c8c8c8"/><circle cx="11.3" cy="2" r="1.7" fill="#c8c8c8"/></svg>
<div class="t" style="left:351px;top:414px;font-size:12px;line-height:14px;color:#dcdcdc;letter-spacing:-0.2px;">default</div>
<svg class="a" style="left:438px;top:417px;" width="10" height="8" viewBox="0 0 10 8"><path d="M1 2 L5 6 L9 2" fill="none" stroke="#c8c8c8" stroke-width="1.6"/></svg>
<div class="a" style="left:342px;top:434px;width:111px;height:1px;background:#d0d0d0;"></div>
<svg class="a" style="left:457px;top:415px;" width="12" height="12" viewBox="0 0 12 12"><path d="M6 0V12M0 6H12" stroke="#d0d0d0" stroke-width="1.8"/></svg>
<svg class="a" style="left:478px;top:413px;" width="14" height="15" viewBox="0 0 14 15"><path d="M3 0H9L13 4V15H3Z" fill="#d8d8d8"/><path d="M0 8H7M5 5.5L7.5 8L5 10.5" stroke="#2a3a6a" stroke-width="1.5" fill="none"/></svg>
<svg class="a" style="left:500px;top:413px;" width="15" height="15" viewBox="0 0 15 15"><path d="M0 0H7L10 3V15H0Z" fill="#5c5c5c"/><path d="M8 8H14M12 5.5L14.5 8L12 10.5" stroke="#5c5c5c" stroke-width="1.5" fill="none"/></svg>
<svg class="a" style="left:525px;top:413px;" width="12" height="15" viewBox="0 0 12 15"><path d="M0 2H12M4 0H8M1.5 3.5H10.5V15H1.5Z" fill="#5c5c5c" stroke="#5c5c5c" stroke-width="1"/><path d="M4 6V13M6 6V13M8 6V13" stroke="#282828" stroke-width="0.8"/></svg>
<div class="a" style="left:534px;top:437px;width:3px;height:60px;background:#2f2f2f;"></div>
<svg class="a" style="left:346px;top:439px;" width="40" height="40" viewBox="0 0 40 40"><path d="M2 38L38 2" fill="none" stroke="#dadada" stroke-width="1.4"/><circle cx="2.5" cy="37.5" r="2" fill="#dadada"/><circle cx="37.5" cy="2.5" r="2" fill="#dadada"/></svg>
<div class="t" style="left:349px;top:483px;font-size:10.5px;line-height:13px;color:#6a6a6a;letter-spacing:0.3px;-webkit-text-stroke:0;">linear</div>
<svg class="a" style="left:395px;top:439px;" width="40" height="40" viewBox="0 0 40 40"><path d="M2 38C15 38 38 2 38 2" fill="none" stroke="#dadada" stroke-width="1.4"/><path d="M2 38L15 38M38 2L38 2" stroke="#dadada" stroke-width="1"/><circle cx="15" cy="38" r="2" fill="#dadada"/><circle cx="38" cy="2" r="2" fill="#dadada"/></svg>
<div class="t" style="left:398px;top:483px;font-size:10.5px;line-height:13px;color:#6a6a6a;letter-spacing:0.3px;-webkit-text-stroke:0;">easeIn</div>
<svg class="a" style="left:444px;top:439px;" width="40" height="40" viewBox="0 0 40 40"><path d="M2 38C2 38 26 2 38 2" fill="none" stroke="#dadada" stroke-width="1.4"/><path d="M2 38L2 38M38 2L26 2" stroke="#dadada" stroke-width="1"/><circle cx="2" cy="38" r="2" fill="#dadada"/><circle cx="26" cy="2" r="2" fill="#dadada"/></svg>
<div class="t" style="left:444px;top:483px;font-size:10.5px;line-height:13px;color:#6a6a6a;letter-spacing:0.3px;-webkit-text-stroke:0;">easeOut</div>
<svg class="a" style="left:346px;top:502px;" width="40" height="40" viewBox="0 0 40 40"><path d="M2 38C14 38 26 2 38 2" fill="none" stroke="#dadada" stroke-width="1.4"/><path d="M2 38L14 38M38 2L26 2" stroke="#dadada" stroke-width="1"/><circle cx="14" cy="38" r="2" fill="#dadada"/><circle cx="26" cy="2" r="2" fill="#dadada"/></svg>
<div class="t" style="left:355px;top:546px;font-size:10.5px;line-height:13px;color:#6a6a6a;letter-spacing:0.3px;-webkit-text-stroke:0;">ease</div>
<svg class="a" style="left:395px;top:502px;" width="40" height="40" viewBox="0 0 40 40"><path d="M2 38C15 38 25 21 38 2" fill="none" stroke="#dadada" stroke-width="1.4"/><path d="M2 38L15 38M38 2L25 21" stroke="#dadada" stroke-width="1"/><circle cx="15" cy="38" r="2" fill="#dadada"/><circle cx="25" cy="21" r="2" fill="#dadada"/></svg>
<div class="t" style="left:398px;top:546px;font-size:10.5px;line-height:13px;color:#6a6a6a;letter-spacing:0.3px;-webkit-text-stroke:0;">sineIn</div>
<svg class="a" style="left:444px;top:502px;" width="40" height="40" viewBox="0 0 40 40"><path d="M2 38C14 20 25 2 38 2" fill="none" stroke="#dadada" stroke-width="1.4"/><path d="M2 38L14 20M38 2L25 2" stroke="#dadada" stroke-width="1"/><circle cx="14" cy="20" r="2" fill="#dadada"/><circle cx="25" cy="2" r="2" fill="#dadada"/></svg>
<div class="t" style="left:444px;top:546px;font-size:10.5px;line-height:13px;color:#6a6a6a;letter-spacing:0.3px;-webkit-text-stroke:0;">sineOut</div>
<svg class="a" style="left:346px;top:565px;" width="40" height="40" viewBox="0 0 40 40"><path d="M2 38C15 38 25 2 38 2" fill="none" stroke="#dadada" stroke-width="1.4"/><path d="M2 38L15 38M38 2L25 2" stroke="#dadada" stroke-width="1"/><circle cx="15" cy="38" r="2" fill="#dadada"/><circle cx="25" cy="2" r="2" fill="#dadada"/></svg>
<div class="t" style="left:355px;top:609px;font-size:10.5px;line-height:13px;color:#6a6a6a;letter-spacing:0.3px;-webkit-text-stroke:0;">sine</div>
<svg class="a" style="left:395px;top:565px;" width="40" height="40" viewBox="0 0 40 40"><path d="M2 38C12 38 24 31 38 2" fill="none" stroke="#dadada" stroke-width="1.4"/><path d="M2 38L12 38M38 2L24 31" stroke="#dadada" stroke-width="1"/><circle cx="12" cy="38" r="2" fill="#dadada"/><circle cx="24" cy="31" r="2" fill="#dadada"/></svg>
<div class="t" style="left:398px;top:609px;font-size:10.5px;line-height:13px;color:#6a6a6a;letter-spacing:0.3px;-webkit-text-stroke:0;">quadIn</div>
<svg class="a" style="left:444px;top:565px;" width="40" height="40" viewBox="0 0 40 40"><path d="M2 38C16 10 28 2 38 2" fill="none" stroke="#dadada" stroke-width="1.4"/><path d="M2 38L16 10M38 2L28 2" stroke="#dadada" stroke-width="1"/><circle cx="16" cy="10" r="2" fill="#dadada"/><circle cx="28" cy="2" r="2" fill="#dadada"/></svg>
<div class="t" style="left:444px;top:609px;font-size:10.5px;line-height:13px;color:#6a6a6a;letter-spacing:0.3px;-webkit-text-stroke:0;">quadOut</div>
<div class="a" style="left:546px;top:85px;width:1089px;height:546px;background:#1d1d1d;"></div>
<svg class="a" style="left:555px;top:93px;" width="8" height="8" viewBox="0 0 8 8"><path d="M1 1L7 7M7 1L1 7" stroke="#7a7a7a" stroke-width="1.3"/></svg>
<div class="a" style="left:571px;top:91px;width:10px;height:10px;background:#b8a57d;"></div>
<svg class="a" style="left:592px;top:90px;" width="9" height="12" viewBox="0 0 9 12"><path d="M2 5V3.2A2.5 2.5 0 0 1 7 3.2" fill="none" stroke="#bdbdbd" stroke-width="1.4"/><rect x="0.5" y="5.5" width="8" height="6" fill="#bdbdbd"/><rect x="4" y="7.5" width="1" height="2" fill="#1d1d1d"/></svg>
<div class="t" style="left:610px;top:91px;font-size:12px;line-height:14px;color:#d6d6d6;letter-spacing:-0.5px;">Composition typwriter MOGRT Linked Comp 01</div>
<svg class="a" style="left:853px;top:93px;" width="9" height="9" viewBox="0 0 9 9"><path d="M0 1H9M0 4.5H9M0 8H9" stroke="#c8c8c8" stroke-width="1.1"/></svg>
<div class="a" style="left:565px;top:117px;width:204px;height:24px;background:#474747;border-radius:4px"></div>
<div class="t" style="left:577px;top:123px;font-size:12px;line-height:14px;color:#cfcfcf;letter-spacing:-0.5px;">typwriter MOGRT Linked Comp 01</div>
<div class="a" style="left:548px;top:148px;width:1087px;height:1px;background:#141414;"></div>
<div class="a" style="left:547px;top:149px;width:1087px;height:455px;background:#1d1d1d;"></div>
<div class="a" style="left:610px;top:149px;width:960px;height:455px;overflow:hidden;background:#848484">
<svg class="a" style="left:0;top:0" width="960" height="455" viewBox="0 0 960 455"><defs><filter id="vb" x="-30%" y="-30%" width="160%" height="160%"><feGaussianBlur stdDeviation="20"/></filter><radialGradient id="tl" cx="0" cy="0" r="1" gradientUnits="userSpaceOnUse" gradientTransform="translate(0 0) scale(260 200)"><stop offset="0" stop-color="#000" stop-opacity="0.22"/><stop offset="1" stop-color="#000" stop-opacity="0"/></radialGradient><radialGradient id="tr" cx="0" cy="0" r="1" gradientUnits="userSpaceOnUse" gradientTransform="translate(960 0) scale(200 170)"><stop offset="0" stop-color="#000" stop-opacity="0.14"/><stop offset="1" stop-color="#000" stop-opacity="0"/></radialGradient><radialGradient id="bl" cx="0" cy="0" r="1" gradientUnits="userSpaceOnUse" gradientTransform="translate(0 455) scale(200 170)"><stop offset="0" stop-color="#000" stop-opacity="0.2"/><stop offset="1" stop-color="#000" stop-opacity="0"/></radialGradient><radialGradient id="br" cx="0" cy="0" r="1" gradientUnits="userSpaceOnUse" gradientTransform="translate(960 455) scale(200 170)"><stop offset="0" stop-color="#000" stop-opacity="0.16"/><stop offset="1" stop-color="#000" stop-opacity="0"/></radialGradient><linearGradient id="tg" x1="0" y1="0" x2="0" y2="1"><stop offset="0" stop-color="#000" stop-opacity="0.07"/><stop offset="1" stop-color="#000" stop-opacity="0"/></linearGradient></defs><rect x="0" y="0" width="960" height="455" fill="#848484"/><path d="M290 -129 C381.3 -150.5 602.0 -150.5 690 -129 C778.0 -107.5 784.7 -28.8 818 0 C851.3 28.8 870.3 29.2 890 44 C909.7 58.8 924.3 72.8 936 89 C947.7 105.2 953.5 120.3 960 141 C966.5 161.7 975.0 188.7 975 213 C975.0 237.3 970.5 265.7 960 287 C949.5 308.3 930.0 323.7 912 341 C894.0 358.3 872.3 376.8 852 391 C831.7 405.2 809.5 415.0 790 426 C770.5 437.0 760.0 439.5 735 457 C710.0 474.5 714.2 515.3 640 531 C565.8 546.7 371.3 563.3 290 551 C208.7 538.7 185.3 480.0 152 457 C118.7 434.0 109.0 429.8 90 413 C71.0 396.2 52.7 377.0 38 356 C23.3 335.0 11.0 310.8 2 287 C-7.0 263.2 -15.7 237.0 -16 213 C-16.3 189.0 -6.7 162.0 0 143 C6.7 124.0 11.7 114.7 24 99 C36.3 83.3 54.3 65.5 74 49 C93.7 32.5 106.0 29.7 142 0 C178.0 -29.7 198.7 -107.5 290 -129Z" fill="#e2e2e2" filter="url(#vb)"/><rect x="0" y="0" width="960" height="455" fill="url(#tl)"/><rect x="0" y="0" width="960" height="455" fill="url(#tr)"/><rect x="0" y="0" width="960" height="455" fill="url(#bl)"/><rect x="0" y="0" width="960" height="455" fill="url(#br)"/><rect x="0" y="0" width="960" height="70" fill="url(#tg)"/></svg>
<svg class="a" style="left:-610px;top:-149px;filter:blur(0.7px)" width="1920" height="1032" viewBox="0 0 1920 1032"><path d="M760.4 344.8H805.2M763.5 341.6V358.6M802.1 341.6V358.6M782.9 344.8V393.8M769.3 393.8H797.9M809.4 360.3H827M834.4 360.3H852M818 360.3L834 388M843 360.3L821 409.9M812 409.9H827.6M857.8 360.3H871M868 357.3V409.9M859.4 409.9H876.6M868 368C872 362 879 360.3 884 360.3C890.5 360.3 894 368 894 376C894 385 889 391 882 391C876 391 871 389 868 385M905.6 375.8H936.6C936.6 366 929 361 921 361C911 361 905.6 368 905.6 377C905.6 387 912 393 922 393C929 393 934 391.5 938.5 388M944.2 360.3H963M977 360.3H995.7M953 360.3L961 394.8L970.2 370L979.6 394.8L987 360.3M1000.4 360.3H1014.7M1014.7 357.3V393.8M1004 393.8H1032.7M1014.7 373C1020 364.5 1027 360.3 1035 360.3H1041.6M1045.2 360.3H1064M1061.5 357.3V393.8M1045.7 393.8H1081.7M1095.7 349.3V385C1095.7 391 1099 393.8 1106 393.8H1121.8M1085.3 360.3H1120.2M1127.9 375.8H1158.9C1158.9 366 1151.3 361 1143.3 361C1133.3 361 1127.9 368 1127.9 377C1127.9 387 1134.3 393 1144.3 393C1151.3 393 1156.3 391.5 1160.8 388M1167.2 360.3H1181.5M1181.5 357.3V393.8M1170.8 393.8H1199.5M1181.5 373C1186.8 364.5 1193.8 360.3 1201.8 360.3H1208.3999999999999M1244.9 344.8H1289.7M1248.0 341.6V358.6M1286.6 341.6V358.6M1267.4 344.8V393.8M1253.8 393.8H1282.4M1296.6 375.8H1327.6C1327.6 366 1320 361 1312 361C1302 361 1296.6 368 1296.6 377C1296.6 387 1303 393 1313 393C1320 393 1325 391.5 1329.5 388M1336.3 360.3H1353.4M1361 360.3H1377.7M1336.3 393.8H1355M1362.8 393.8H1381.6M1345 360.3L1372 393.8M1369 360.3L1346 393.8M1394.7 349.3V385C1394.7 391 1398 393.8 1405 393.8H1420.8M1384.3 360.3H1419.2" fill="none" stroke="#8f8f8f" stroke-width="5.5" stroke-linejoin="round"/><circle cx="1061.9" cy="345.6" r="4.8" fill="#8f8f8f"/></svg>
<div class="a" style="left:302px;top:287px;width:356px;height:190px;background:#fbfbfb;border-radius:15px;filter:blur(0.8px)"></div>
<div class="a" style="left:356px;top:293px;width:244px;height:175px;background:linear-gradient(180deg,#2e2e2e 0px,#505050 8px,#4a4a4a 25%,#3c3c3c 60%,#2e2e2e 100%);clip-path:polygon(0 8px,100% 2px,100% 100%,0 100%);filter:blur(0.7px)"></div>
<div class="a" style="left:356px;top:301px;width:34px;height:170px;background:#0d0d0d;filter:blur(0.6px)"></div>
<div class="t" style="left:416px;top:351px;font-family:'Liberation Sans',sans-serif;font-weight:bold;font-size:90px;line-height:100px;color:#eeeeee;-webkit-text-stroke:2px #eeeeee;filter:blur(1.2px);transform-origin:0 0;transform:scaleX(0.76)">Text</div>
<svg class="a" style="left:562px;top:360px" width="14" height="70" viewBox="0 0 14 70"><path d="M2 1L7 5L12 1M7 5V65M2 69L7 65L12 69M4 33H10" stroke="#bbbbbb" stroke-width="2" fill="none"/></svg>
</div>
<div class="t" style="left:557px;top:160px;font-size:12px;line-height:14px;color:#e8e8e8;letter-spacing:-0.5px;text-shadow:0 0 2px #000,1px 1px 1px #000;">Active Camera (Camera 1)</div>
<div class="a" style="left:547px;top:604px;width:1088px;height:27px;background:#1d1d1d;"></div>
<div class="a" style="left:556px;top:610px;width:78px;height:19px;background:#121212;border-radius:4px;border:1px solid #262626"></div>
<div class="t" style="left:565px;top:613px;font-size:12px;line-height:14px;color:#cfcfcf;letter-spacing:-0.45px;">50%</div>
<svg class="a" style="left:615px;top:615px;" width="12" height="9" viewBox="0 0 12 9"><path d="M1 2 L6 7 L11 2" fill="none" stroke="#cfcfcf" stroke-width="1.6"/></svg>
<div class="a" style="left:644px;top:611px;width:1px;height:16px;background:#2c2c2c;"></div>
<div class="a" style="left:653px;top:610px;width:88px;height:19px;background:#121212;border-radius:4px;border:1px solid #262626"></div>
<div class="t" style="left:662px;top:613px;font-size:12px;line-height:14px;color:#cfcfcf;letter-spacing:-0.45px;">Quarter</div>
<svg class="a" style="left:722px;top:615px;" width="12" height="9" viewBox="0 0 12 9"><path d="M1 2 L6 7 L11 2" fill="none" stroke="#cfcfcf" stroke-width="1.6"/></svg>
<div class="a" style="left:752px;top:611px;width:1px;height:16px;background:#2c2c2c;"></div>
<svg class="a" style="left:763px;top:612px;" width="14" height="14" viewBox="0 0 14 14"><rect x="1" y="1" width="12" height="12" fill="none" stroke="#b8b8b8" stroke-width="1.2"/><path d="M4 10L7 6L6 5L10 3" stroke="#b8b8b8" stroke-width="1.2" fill="none"/></svg>
<div class="a" style="left:785px;top:609px;width:20px;height:20px;background:#3a3a3a;border-radius:3px"></div>
<svg class="a" style="left:788px;top:612px;" width="14" height="14" viewBox="0 0 14 14"><rect x="1" y="1" width="12" height="12" fill="none" stroke="#b8b8b8" stroke-width="1.2"/><path d="M1 4H13M1 7H13M1 10H13M4 1V13M7 1V13M10 1V13" stroke="#b8b8b8" stroke-width="0.8"/></svg>
<svg class="a" style="left:812px;top:612px;" width="14" height="14" viewBox="0 0 14 14"><path d="M3 1L13 3L12 13L1 11Z" fill="none" stroke="#b8b8b8" stroke-width="1.2"/></svg>
<svg class="a" style="left:836px;top:612px;" width="14" height="14" viewBox="0 0 14 14"><rect x="1" y="1" width="12" height="12" fill="none" stroke="#b8b8b8" stroke-width="1.2"/><rect x="4" y="4" width="6" height="6" fill="#b8b8b8"/></svg>
<svg class="a" style="left:860px;top:612px;" width="14" height="14" viewBox="0 0 14 14"><rect x="1" y="2" width="12" height="9" fill="none" stroke="#b8b8b8" stroke-width="1.2"/><path d="M7 0V13M4 6H10" stroke="#b8b8b8" stroke-width="1.2"/></svg>
<div class="a" style="left:885px;top:611px;width:1px;height:16px;background:#2c2c2c;"></div>
<svg class="a" style="left:898px;top:612px;" width="14" height="14" viewBox="0 0 14 14"><circle cx="7" cy="4.5" r="3.5" fill="#e23c3c"/><circle cx="4.5" cy="9" r="3.5" fill="#3cc14a"/><circle cx="9.5" cy="9" r="3.5" fill="#3c6ce2"/></svg>
<svg class="a" style="left:922px;top:612px;" width="14" height="14" viewBox="0 0 14 14"><circle cx="7" cy="7" r="5.5" fill="none" stroke="#b8b8b8" stroke-width="1.3"/><path d="M7 1.5L9 7L4 11M2 6L8 4L11 10" stroke="#b8b8b8" stroke-width="1" fill="none"/></svg>
<div class="t" style="left:945px;top:612px;font-size:12px;line-height:14px;color:#3a8ef0;letter-spacing:-0.4px;">+0,0</div>
<div class="a" style="left:985px;top:611px;width:1px;height:16px;background:#2c2c2c;"></div>
<svg class="a" style="left:997px;top:612px;" width="16" height="14" viewBox="0 0 16 14"><path d="M1 4H4.5L6 2H10L11.5 4H15V13H1Z" fill="#b8b8b8"/><circle cx="8" cy="8.5" r="2.6" fill="#1d1d1d"/></svg>
<svg class="a" style="left:1021px;top:611px;" width="16" height="16" viewBox="0 0 16 16"><circle cx="6" cy="10" r="4.5" fill="none" stroke="#b8b8b8" stroke-width="1.3"/><circle cx="10" cy="6" r="4.5" fill="none" stroke="#777" stroke-width="1.1"/></svg>
<div class="a" style="left:1046px;top:611px;width:1px;height:16px;background:#2c2c2c;"></div>
<div class="a" style="left:1056px;top:610px;width:71px;height:19px;background:#121212;border-radius:4px;border:1px solid #262626"></div>
<div class="t" style="left:1066px;top:613px;font-size:12px;line-height:14px;color:#d0d0d0;letter-spacing:-0.35px;">0:00:02:39</div>
<div class="a" style="left:1145px;top:611px;width:1px;height:16px;background:#2c2c2c;"></div>
<div class="a" style="left:1156px;top:610px;width:85px;height:19px;background:#121212;border-radius:4px;border:1px solid #262626"></div>
<svg class="a" style="left:1167px;top:612px;" width="15" height="14" viewBox="0 0 15 14"><path d="M6 1L11 3.5V9L6 11.5L1 9V3.5Z M1 3.5L6 6L11 3.5M6 6V11.5" fill="none" stroke="#b8b8b8" stroke-width="1.2"/><path d="M9 13L14 8" stroke="#b8b8b8" stroke-width="1.5"/></svg>
<div class="t" style="left:1189px;top:612px;font-size:12px;line-height:14px;color:#d0d0d0;letter-spacing:-0.4px;">Draft 3D</div>
<div class="a" style="left:1253px;top:611px;width:1px;height:16px;background:#2c2c2c;"></div>
<svg class="a" style="left:1264px;top:612px;" width="15" height="14" viewBox="0 0 15 14"><path d="M3 1H12L14 13H1Z M7.5 1V13 M2 7H13" fill="none" stroke="#6a6a6a" stroke-width="1.2"/></svg>
<div class="a" style="left:1286px;top:609px;width:20px;height:20px;background:#2e2e2e;border-radius:3px"></div>
<svg class="a" style="left:1289px;top:612px;" width="14" height="14" viewBox="0 0 14 14"><rect x="1" y="2" width="12" height="10" fill="none" stroke="#8a8a8a" stroke-width="1.2"/><rect x="3" y="4" width="8" height="6" fill="#8a8a8a"/></svg>
<div class="a" style="left:1314px;top:611px;width:1px;height:16px;background:#2c2c2c;"></div>
<div class="a" style="left:1323px;top:610px;width:91px;height:19px;background:#121212;border-radius:4px;border:1px solid #262626"></div>
<div class="t" style="left:1332px;top:613px;font-size:12px;line-height:14px;color:#cfcfcf;letter-spacing:-0.45px;">Classic 3D</div>
<svg class="a" style="left:1395px;top:615px;" width="12" height="9" viewBox="0 0 12 9"><path d="M1 2 L6 7 L11 2" fill="none" stroke="#cfcfcf" stroke-width="1.6"/></svg>
<div class="a" style="left:1421px;top:611px;width:1px;height:16px;background:#2c2c2c;"></div>
<div class="a" style="left:1430px;top:610px;width:104px;height:19px;background:#121212;border-radius:4px;border:1px solid #262626"></div>
<div class="t" style="left:1439px;top:613px;font-size:12px;line-height:14px;color:#cfcfcf;letter-spacing:-0.45px;">Active Came...</div>
<svg class="a" style="left:1515px;top:615px;" width="12" height="9" viewBox="0 0 12 9"><path d="M1 2 L6 7 L11 2" fill="none" stroke="#cfcfcf" stroke-width="1.6"/></svg>
<div class="a" style="left:1545px;top:611px;width:1px;height:16px;background:#2c2c2c;"></div>
<div class="a" style="left:1555px;top:610px;width:73px;height:19px;background:#121212;border-radius:4px;border:1px solid #262626"></div>
<div class="t" style="left:1564px;top:613px;font-size:12px;line-height:14px;color:#cfcfcf;letter-spacing:-0.45px;">1 View</div>
<svg class="a" style="left:1609px;top:615px;" width="12" height="9" viewBox="0 0 12 9"><path d="M1 2 L6 7 L11 2" fill="none" stroke="#cfcfcf" stroke-width="1.6"/></svg>
<div class="a" style="left:1639px;top:85px;width:273px;height:546px;background:#1d1d1d;"></div>
<div class="t" style="left:1651px;top:90px;font-size:12px;line-height:14px;color:#d6d6d6;letter-spacing:-0.55px;">Effects &amp; Presets</div>
<svg class="a" style="left:1891px;top:93px;" width="9" height="9" viewBox="0 0 9 9"><path d="M0 1H9M0 4.5H9M0 8H9" stroke="#c8c8c8" stroke-width="1.1"/></svg>
<div class="a" style="left:1645px;top:112px;width:261px;height:19px;background:#0f0f0f;border-radius:4px;border:1px solid #262626"></div>
<svg class="a" style="left:1651px;top:114px;" width="17" height="14" viewBox="0 0 17 14"><circle cx="5.5" cy="5.5" r="4" fill="none" stroke="#c0c0c0" stroke-width="1.3"/><path d="M8.5 8.5L11.5 11.5M11 6L13 8L15 6" stroke="#c0c0c0" stroke-width="1.2" fill="none"/></svg>
<div class="a" style="left:1640px;top:149px;width:270px;height:1px;background:#131313;"></div>
<svg class="a" style="left:1644px;top:136px;" width="8" height="10" viewBox="0 0 8 10"><path d="M2 1 L6 5 L2 9" fill="none" stroke="#bdbdbd" stroke-width="1.6"/></svg>
<div class="t" style="left:1655px;top:134px;font-size:12px;line-height:14px;color:#c8c8c8;letter-spacing:-0.5px;">* Animation Presets</div>
<div class="a" style="left:1640px;top:166px;width:270px;height:1px;background:#131313;"></div>
<svg class="a" style="left:1644px;top:153px;" width="8" height="10" viewBox="0 0 8 10"><path d="M2 1 L6 5 L2 9" fill="none" stroke="#bdbdbd" stroke-width="1.6"/></svg>
<div class="t" style="left:1655px;top:151px;font-size:12px;line-height:14px;color:#c8c8c8;letter-spacing:-0.5px;">3D Channel</div>
<div class="a" style="left:1640px;top:183px;width:270px;height:1px;background:#131313;"></div>
<svg class="a" style="left:1644px;top:170px;" width="8" height="10" viewBox="0 0 8 10"><path d="M2 1 L6 5 L2 9" fill="none" stroke="#bdbdbd" stroke-width="1.6"/></svg>
<div class="t" style="left:1655px;top:168px;font-size:12px;line-height:14px;color:#c8c8c8;letter-spacing:-0.5px;">Audio</div>
<div class="a" style="left:1640px;top:200px;width:270px;height:1px;background:#131313;"></div>
<svg class="a" style="left:1644px;top:187px;" width="8" height="10" viewBox="0 0 8 10"><path d="M2 1 L6 5 L2 9" fill="none" stroke="#bdbdbd" stroke-width="1.6"/></svg>
<div class="t" style="left:1655px;top:185px;font-size:12px;line-height:14px;color:#c8c8c8;letter-spacing:-0.5px;">Blur &amp; Sharpen</div>
<div class="a" style="left:1640px;top:217px;width:270px;height:1px;background:#131313;"></div>
<svg class="a" style="left:1644px;top:204px;" width="8" height="10" viewBox="0 0 8 10"><path d="M2 1 L6 5 L2 9" fill="none" stroke="#bdbdbd" stroke-width="1.6"/></svg>
<div class="t" style="left:1655px;top:202px;font-size:12px;line-height:14px;color:#c8c8c8;letter-spacing:-0.5px;">Boris FX Mocha</div>
<div class="a" style="left:1640px;top:234px;width:270px;height:1px;background:#131313;"></div>
<svg class="a" style="left:1644px;top:221px;" width="8" height="10" viewBox="0 0 8 10"><path d="M2 1 L6 5 L2 9" fill="none" stroke="#bdbdbd" stroke-width="1.6"/></svg>
<div class="t" style="left:1655px;top:219px;font-size:12px;line-height:14px;color:#c8c8c8;letter-spacing:-0.5px;">Channel</div>
<div class="a" style="left:1640px;top:251px;width:270px;height:1px;background:#131313;"></div>
<svg class="a" style="left:1644px;top:238px;" width="8" height="10" viewBox="0 0 8 10"><path d="M2 1 L6 5 L2 9" fill="none" stroke="#bdbdbd" stroke-width="1.6"/></svg>
<div class="t" style="left:1655px;top:236px;font-size:12px;line-height:14px;color:#c8c8c8;letter-spacing:-0.5px;">Cinema 4D</div>
<div class="a" style="left:1640px;top:268px;width:270px;height:1px;background:#131313;"></div>
<svg class="a" style="left:1644px;top:255px;" width="8" height="10" viewBox="0 0 8 10"><path d="M2 1 L6 5 L2 9" fill="none" stroke="#bdbdbd" stroke-width="1.6"/></svg>
<div class="t" style="left:1655px;top:253px;font-size:12px;line-height:14px;color:#c8c8c8;letter-spacing:-0.5px;">Color Correction</div>
<div class="a" style="left:1640px;top:285px;width:270px;height:1px;background:#131313;"></div>
<svg class="a" style="left:1644px;top:272px;" width="8" height="10" viewBox="0 0 8 10"><path d="M2 1 L6 5 L2 9" fill="none" stroke="#bdbdbd" stroke-width="1.6"/></svg>
<div class="t" style="left:1655px;top:270px;font-size:12px;line-height:14px;color:#c8c8c8;letter-spacing:-0.5px;">Distort</div>
<div class="a" style="left:1640px;top:302px;width:270px;height:1px;background:#131313;"></div>
<svg class="a" style="left:1644px;top:289px;" width="8" height="10" viewBox="0 0 8 10"><path d="M2 1 L6 5 L2 9" fill="none" stroke="#bdbdbd" stroke-width="1.6"/></svg>
<div class="t" style="left:1655px;top:287px;font-size:12px;line-height:14px;color:#c8c8c8;letter-spacing:-0.5px;">Expression Controls</div>
<div class="a" style="left:1640px;top:319px;width:270px;height:1px;background:#131313;"></div>
<svg class="a" style="left:1644px;top:306px;" width="8" height="10" viewBox="0 0 8 10"><path d="M2 1 L6 5 L2 9" fill="none" stroke="#bdbdbd" stroke-width="1.6"/></svg>
<div class="t" style="left:1655px;top:304px;font-size:12px;line-height:14px;color:#c8c8c8;letter-spacing:-0.5px;">Generate</div>
<div class="a" style="left:1640px;top:336px;width:270px;height:1px;background:#131313;"></div>
<svg class="a" style="left:1644px;top:323px;" width="8" height="10" viewBox="0 0 8 10"><path d="M2 1 L6 5 L2 9" fill="none" stroke="#bdbdbd" stroke-width="1.6"/></svg>
<div class="t" style="left:1655px;top:321px;font-size:12px;line-height:14px;color:#c8c8c8;letter-spacing:-0.5px;">Immersive Video</div>
<div class="a" style="left:1640px;top:353px;width:270px;height:1px;background:#131313;"></div>
<svg class="a" style="left:1644px;top:340px;" width="8" height="10" viewBox="0 0 8 10"><path d="M2 1 L6 5 L2 9" fill="none" stroke="#bdbdbd" stroke-width="1.6"/></svg>
<div class="t" style="left:1655px;top:338px;font-size:12px;line-height:14px;color:#c8c8c8;letter-spacing:-0.5px;">Keying</div>
<div class="a" style="left:1640px;top:370px;width:270px;height:1px;background:#131313;"></div>
<svg class="a" style="left:1644px;top:357px;" width="8" height="10" viewBox="0 0 8 10"><path d="M2 1 L6 5 L2 9" fill="none" stroke="#bdbdbd" stroke-width="1.6"/></svg>
<div class="t" style="left:1655px;top:355px;font-size:12px;line-height:14px;color:#c8c8c8;letter-spacing:-0.5px;">Matte</div>
<div class="a" style="left:1640px;top:387px;width:270px;height:1px;background:#131313;"></div>
<svg class="a" style="left:1644px;top:374px;" width="8" height="10" viewBox="0 0 8 10"><path d="M2 1 L6 5 L2 9" fill="none" stroke="#bdbdbd" stroke-width="1.6"/></svg>
<div class="t" style="left:1655px;top:372px;font-size:12px;line-height:14px;color:#c8c8c8;letter-spacing:-0.5px;">Noise &amp; Grain</div>
<div class="a" style="left:1640px;top:404px;width:270px;height:1px;background:#131313;"></div>
<svg class="a" style="left:1644px;top:391px;" width="8" height="10" viewBox="0 0 8 10"><path d="M2 1 L6 5 L2 9" fill="none" stroke="#bdbdbd" stroke-width="1.6"/></svg>
<div class="t" style="left:1655px;top:389px;font-size:12px;line-height:14px;color:#c8c8c8;letter-spacing:-0.5px;">Obsolete</div>
<div class="a" style="left:1640px;top:421px;width:270px;height:1px;background:#131313;"></div>
<svg class="a" style="left:1644px;top:408px;" width="8" height="10" viewBox="0 0 8 10"><path d="M2 1 L6 5 L2 9" fill="none" stroke="#bdbdbd" stroke-width="1.6"/></svg>
<div class="t" style="left:1655px;top:406px;font-size:12px;line-height:14px;color:#c8c8c8;letter-spacing:-0.5px;">Perspective</div>
<div class="a" style="left:1640px;top:438px;width:270px;height:1px;background:#131313;"></div>
<svg class="a" style="left:1644px;top:425px;" width="8" height="10" viewBox="0 0 8 10"><path d="M2 1 L6 5 L2 9" fill="none" stroke="#bdbdbd" stroke-width="1.6"/></svg>
<div class="t" style="left:1655px;top:423px;font-size:12px;line-height:14px;color:#c8c8c8;letter-spacing:-0.5px;">Plugin Everything</div>
<div class="a" style="left:1640px;top:455px;width:270px;height:1px;background:#131313;"></div>
<svg class="a" style="left:1644px;top:442px;" width="8" height="10" viewBox="0 0 8 10"><path d="M2 1 L6 5 L2 9" fill="none" stroke="#bdbdbd" stroke-width="1.6"/></svg>
<div class="t" style="left:1655px;top:440px;font-size:12px;line-height:14px;color:#c8c8c8;letter-spacing:-0.5px;">Simulation</div>
<div class="a" style="left:1640px;top:472px;width:270px;height:1px;background:#131313;"></div>
<svg class="a" style="left:1644px;top:459px;" width="8" height="10" viewBox="0 0 8 10"><path d="M2 1 L6 5 L2 9" fill="none" stroke="#bdbdbd" stroke-width="1.6"/></svg>
<div class="t" style="left:1655px;top:457px;font-size:12px;line-height:14px;color:#c8c8c8;letter-spacing:-0.5px;">Stylize</div>
<div class="a" style="left:1640px;top:489px;width:270px;height:1px;background:#131313;"></div>
<svg class="a" style="left:1644px;top:476px;" width="8" height="10" viewBox="0 0 8 10"><path d="M2 1 L6 5 L2 9" fill="none" stroke="#bdbdbd" stroke-width="1.6"/></svg>
<div class="t" style="left:1655px;top:474px;font-size:12px;line-height:14px;color:#c8c8c8;letter-spacing:-0.5px;">Text</div>
<div class="a" style="left:1640px;top:506px;width:270px;height:1px;background:#131313;"></div>
<svg class="a" style="left:1644px;top:493px;" width="8" height="10" viewBox="0 0 8 10"><path d="M2 1 L6 5 L2 9" fill="none" stroke="#bdbdbd" stroke-width="1.6"/></svg>
<div class="t" style="left:1655px;top:491px;font-size:12px;line-height:14px;color:#c8c8c8;letter-spacing:-0.5px;">Time</div>
<div class="a" style="left:1640px;top:523px;width:270px;height:1px;background:#131313;"></div>
<svg class="a" style="left:1644px;top:510px;" width="8" height="10" viewBox="0 0 8 10"><path d="M2 1 L6 5 L2 9" fill="none" stroke="#bdbdbd" stroke-width="1.6"/></svg>
<div class="t" style="left:1655px;top:508px;font-size:12px;line-height:14px;color:#c8c8c8;letter-spacing:-0.5px;">Transition</div>
<div class="a" style="left:1640px;top:540px;width:270px;height:1px;background:#131313;"></div>
<svg class="a" style="left:1644px;top:527px;" width="8" height="10" viewBox="0 0 8 10"><path d="M2 1 L6 5 L2 9" fill="none" stroke="#bdbdbd" stroke-width="1.6"/></svg>
<div class="t" style="left:1655px;top:525px;font-size:12px;line-height:14px;color:#c8c8c8;letter-spacing:-0.5px;">Utility</div>
<div class="a" style="left:1640px;top:541px;width:270px;height:2px;background:#141414;"></div>
<svg class="a" style="left:1889px;top:548px;" width="14" height="14" viewBox="0 0 14 14"><path d="M4 1H13V13H1V4Z" fill="#c8c8c8"/><path d="M1 9L5 9L5 13" fill="#1d1d1d" stroke="#1d1d1d"/></svg>
<div class="a" style="left:1640px;top:568px;width:272px;height:2px;background:#0e0e0e;"></div>
<div class="t" style="left:1651px;top:576px;font-size:12px;line-height:14px;color:#c8c8c8;letter-spacing:-0.5px;">Character</div>
<div class="a" style="left:1640px;top:594px;width:272px;height:3px;background:#0e0e0e;"></div>
<div class="t" style="left:1651px;top:602px;font-size:12px;line-height:14px;color:#c8c8c8;letter-spacing:-0.5px;">Tracker</div>
<div class="a" style="left:1640px;top:620px;width:272px;height:2px;background:#0e0e0e;"></div>
<div class="a" style="left:1912px;top:85px;width:8px;height:546px;background:#111111;"></div>
<div class="a" style="left:1913px;top:86px;width:6px;height:540px;background:#4d4d4d;"></div>
<div class="a" style="left:0px;top:635px;width:1920px;height:397px;background:#1d1d1d;"></div>
<svg class="a" style="left:10px;top:646px;" width="8" height="8" viewBox="0 0 8 8"><path d="M1 1L7 7M7 1L1 7" stroke="#7a7a7a" stroke-width="1.3"/></svg>
<div class="a" style="left:27px;top:641px;width:10px;height:10px;background:#b8a57d;"></div>
<div class="t" style="left:48px;top:640px;font-size:12px;line-height:14px;color:#d6d6d6;letter-spacing:-0.5px;">typwriter MOGRT Linked Comp 01</div>
<svg class="a" style="left:226px;top:643px;" width="9" height="9" viewBox="0 0 9 9"><path d="M0 1H9M0 4.5H9M0 8H9" stroke="#c8c8c8" stroke-width="1.1"/></svg>
<div class="a" style="left:12px;top:656px;width:222px;height:2px;background:#d0d0d0;"></div>
<div class="t" style="left:272px;top:640px;font-size:12px;line-height:14px;color:#c8c8c8;letter-spacing:-0.5px;">Render Queue</div>
<div class="t" style="left:14px;top:662px;font-size:15.5px;line-height:19px;color:#3a8ef0;letter-spacing:-0.35px;font-weight:bold;">0:00:02:39</div>
<div class="t" style="left:12px;top:679px;font-size:11px;line-height:13px;color:#2f7fe0;letter-spacing:-0.45px;">00159 (60.00 fps)</div>
<div class="a" style="left:100px;top:667px;width:371px;height:19px;background:#0f0f0f;border-radius:4px;border:1px solid #242424"></div>
<svg class="a" style="left:106px;top:670px;" width="17" height="14" viewBox="0 0 17 14"><circle cx="5.5" cy="5.5" r="4" fill="none" stroke="#c0c0c0" stroke-width="1.3"/><path d="M8.5 8.5L11.5 11.5M11 6L13 8L15 6" stroke="#c0c0c0" stroke-width="1.2" fill="none"/></svg>
<svg class="a" style="left:482px;top:669px;" width="18" height="16" viewBox="0 0 18 16"><path d="M1 3H7M4 3V12H10M8 7H14M10 3H16" stroke="#c0c0c0" stroke-width="1.4" fill="none"/><path d="M14 13L16 15L18 13" stroke="#c0c0c0" stroke-width="1" fill="none"/></svg>
<svg class="a" style="left:507px;top:669px;" width="17" height="16" viewBox="0 0 17 16"><path d="M2 7A6.5 6.5 0 0 1 15 7Z" fill="#c0c0c0"/><path d="M8.5 3V15M5 10H12" stroke="#c0c0c0" stroke-width="2"/><rect x="1" y="11" width="15" height="4" fill="#5a5a5a"/></svg>
<svg class="a" style="left:531px;top:669px;" width="17" height="16" viewBox="0 0 17 16"><rect x="5" y="1" width="11" height="12" fill="#c0c0c0"/><rect x="1" y="4" width="4" height="12" fill="#c0c0c0"/><path d="M8 7H13" stroke="#1d1d1d" stroke-width="1.4"/></svg>
<div class="a" style="left:554px;top:665px;width:23px;height:23px;background:#4a4a4a;border-radius:3px"></div>
<svg class="a" style="left:557px;top:668px;" width="17" height="17" viewBox="0 0 17 17"><ellipse cx="10" cy="7" rx="6" ry="5" fill="none" stroke="#d8d8d8" stroke-width="1.4"/><path d="M3 8A6 5 0 0 0 12 14M2 11A6 5 0 0 0 9 16" fill="none" stroke="#d8d8d8" stroke-width="1.4"/></svg>
<svg class="a" style="left:580px;top:668px;" width="18" height="17" viewBox="0 0 18 17"><rect x="1" y="3" width="15" height="13" fill="none" stroke="#c0c0c0" stroke-width="1.3"/><path d="M4 6C7 6 9 13 13 13" fill="none" stroke="#c0c0c0" stroke-width="1.3"/><path d="M4 0V3M8 0V3M12 0V3" stroke="#c0c0c0" stroke-width="1"/></svg>
<div class="a" style="left:0px;top:695px;width:608px;height:18px;background:#1d1d1d;"></div>
<div class="a" style="left:0px;top:713px;width:608px;height:1px;background:#141414;"></div>
<svg class="a" style="left:6px;top:699px;" width="14" height="10" viewBox="0 0 14 10"><path d="M1 5C4 0 10 0 13 5C10 10 4 10 1 5Z" fill="#bcbcbc"/><circle cx="7" cy="5" r="2.2" fill="#1d1d1d"/></svg>
<svg class="a" style="left:21px;top:698px;" width="14" height="12" viewBox="0 0 14 12"><path d="M1 4H4L8 1V11L4 8H1Z" fill="#bcbcbc"/><path d="M10 3A4 4 0 0 1 10 9M12 1A7 7 0 0 1 12 11" stroke="#bcbcbc" stroke-width="1.2" fill="none"/></svg>
<svg class="a" style="left:38px;top:700px;" width="9" height="9" viewBox="0 0 9 9"><circle cx="4.5" cy="4.5" r="3.8" fill="#bcbcbc"/></svg>
<svg class="a" style="left:53px;top:697px;" width="11" height="13" viewBox="0 0 11 13"><path d="M2.5 6V4A3 3 0 0 1 8.5 4V6" fill="none" stroke="#bcbcbc" stroke-width="1.5"/><rect x="1" y="6" width="9" height="7" fill="#bcbcbc"/></svg>
<div class="a" style="left:69px;top:698px;width:1px;height:12px;background:#2a2a2a;"></div>
<svg class="a" style="left:83px;top:698px;" width="13" height="13" viewBox="0 0 13 13"><path d="M1 1H7L12 6L7 11L1 5Z" fill="#bcbcbc"/><circle cx="4" cy="4" r="1" fill="#1d1d1d"/></svg>
<div class="a" style="left:101px;top:698px;width:1px;height:12px;background:#2a2a2a;"></div>
<div class="t" style="left:107px;top:698px;font-size:11px;line-height:13px;color:#9a9a9a;">#</div>
<div class="a" style="left:134px;top:698px;width:1px;height:12px;background:#2a2a2a;"></div>
<div class="t" style="left:140px;top:698px;font-size:12px;line-height:14px;color:#c8c8c8;letter-spacing:-0.5px;">Source Name</div>
<div class="a" style="left:264px;top:698px;width:1px;height:12px;background:#2a2a2a;"></div>
<div class="t" style="left:270px;top:698px;font-size:12px;line-height:14px;color:#c8c8c8;letter-spacing:-0.5px;">Mode</div>
<div class="t" style="left:344px;top:698px;font-size:12px;line-height:14px;color:#c8c8c8;">T</div>
<div class="t" style="left:362px;top:698px;font-size:12px;line-height:14px;color:#c8c8c8;letter-spacing:-0.5px;">Track Matte</div>
<svg class="a" style="left:446px;top:698px;" width="11" height="11" viewBox="0 0 11 11"><rect x="0" y="0" width="11" height="11" fill="#bcbcbc"/><circle cx="5.5" cy="5.5" r="3.3" fill="#1d1d1d"/></svg>
<svg class="a" style="left:461px;top:698px;" width="11" height="11" viewBox="0 0 11 11"><rect x="0.7" y="0.7" width="9.6" height="9.6" fill="none" stroke="#bcbcbc" stroke-width="1.2"/><path d="M2 9L10 1L6 6Z" fill="#bcbcbc"/></svg>
<div class="t" style="left:481px;top:698px;font-size:12px;line-height:14px;color:#c8c8c8;letter-spacing:-0.5px;">Parent &amp; Link</div>
<div class="a" style="left:592px;top:698px;width:1px;height:12px;background:#2a2a2a;"></div>
<div class="a" style="left:607px;top:695px;width:2px;height:318px;background:#101010;"></div>
<div class="a" style="left:0;top:714px;width:1920px;height:299px;overflow:hidden">
<div class="a" style="left:0px;top:-7px;width:607px;height:17px;background:#1f1f1f;"></div>
<svg class="a" style="left:9px;top:-4px;" width="8" height="10" viewBox="0 0 8 10"><path d="M7 0V10L0 5Z" fill="#c8c8c8"/></svg>
<svg class="a" style="left:23px;top:-4px;" width="10" height="10" viewBox="0 0 10 10"><path d="M5 0.7L9.3 5L5 9.3L0.7 5Z" fill="#7a7a7a" stroke="#b8b8b8" stroke-width="1.1"/></svg>
<svg class="a" style="left:39px;top:-4px;" width="8" height="10" viewBox="0 0 8 10"><path d="M0 0V10L7 5Z" fill="#c8c8c8"/></svg>
<div class="a" style="left:121px;top:-6px;width:15px;height:15px;background:#141414;border-radius:2px"></div>
<svg class="a" style="left:123px;top:-6px;" width="12" height="14" viewBox="0 0 12 14"><circle cx="6" cy="8" r="4.6" fill="none" stroke="#3a8ef0" stroke-width="1.6"/><path d="M4 1.5H8M6 1.5V3.2M6 8L8.3 5.8" stroke="#3a8ef0" stroke-width="1.5"/></svg>
<svg class="a" style="left:140px;top:-5px;" width="12" height="12" viewBox="0 0 12 12"><path d="M1 0V11H12M3 9L5 4L8 8L11 3" fill="none" stroke="#8a8a8a" stroke-width="1.1"/></svg>
<div class="t" style="left:160px;top:-6px;font-size:12px;line-height:14px;color:#c8c8c8;letter-spacing:-0.5px;">Position</div>
<div class="t" style="left:270px;top:-6px;font-size:12px;line-height:14px;color:#3a8ef0;letter-spacing:-0.45px;">0,0,404,9,0,0</div>
<svg class="a" style="left:493px;top:-6px;" width="14" height="14" viewBox="0 0 14 14"><path d="M11.8 3.8A5.6 5.6 0 1 0 12.6 8.2" fill="none" stroke="#5a5a5a" stroke-width="1.6"/><path d="M9.3 6A2.6 2.6 0 1 0 9.6 8" fill="none" stroke="#5a5a5a" stroke-width="1.5"/></svg>
<div class="a" style="left:0px;top:9px;width:607px;height:1px;background:#151515;"></div>
<div class="a" style="left:0px;top:10px;width:607px;height:17px;background:#282828;"></div>
<div class="a" style="left:7px;top:12px;width:12px;height:13px;background:#141414;"></div>
<svg class="a" style="left:7px;top:14px;" width="13" height="9" viewBox="0 0 13 9"><path d="M0.5 4.5C3.5 0 9.5 0 12.5 4.5C9.5 9 3.5 9 0.5 4.5Z" fill="#d8d8d8"/><circle cx="6.5" cy="4.5" r="2" fill="#141414"/></svg>
<div class="a" style="left:37px;top:13px;width:11px;height:11px;background:#141414;"></div>
<div class="a" style="left:52px;top:13px;width:11px;height:11px;background:#141414;"></div>
<svg class="a" style="left:74px;top:15px;" width="10" height="7" viewBox="0 0 10 7"><path d="M1 1L5 5L9 1" fill="none" stroke="#c8c8c8" stroke-width="1.6"/></svg>
<div class="a" style="left:87px;top:13px;width:12px;height:11px;background:#d13b3b;"></div>
<div class="t" style="left:108px;top:11px;font-size:12px;line-height:14px;color:#c8c8c8;letter-spacing:-0.2px;">13</div>
<div class="a" style="left:138px;top:13px;width:12px;height:11px;background:#f4f4f4;border:1px solid #111"></div>
<div class="t" style="left:156px;top:11px;font-size:12px;line-height:14px;color:#c8c8c8;letter-spacing:-0.5px;">Pale Blue Solid 1</div>
<div class="a" style="left:268px;top:11px;width:68px;height:15px;background:#0f0f0f;border-radius:4px"></div>
<div class="t" style="left:276px;top:11px;font-size:12px;line-height:14px;color:#d0d0d0;letter-spacing:-0.45px;">Normal</div>
<svg class="a" style="left:318px;top:15px;" width="12" height="8" viewBox="0 0 12 8"><path d="M1 1.5L6 6.5L11 1.5" fill="none" stroke="#d0d0d0" stroke-width="1.8"/></svg>
<div class="a" style="left:341px;top:12px;width:13px;height:13px;background:#141414;"></div>
<svg class="a" style="left:359px;top:12px;" width="13" height="12" viewBox="0 0 13 12"><circle cx="5.5" cy="6" r="4.3" fill="none" stroke="#9a9a9a" stroke-width="1.3"/><circle cx="5.5" cy="6" r="1.5" fill="#9a9a9a"/><path d="M11 1V4M11 6V8M11 10V11" stroke="#9a9a9a" stroke-width="1.3"/></svg>
<div class="a" style="left:375px;top:11px;width:68px;height:15px;background:#0f0f0f;border-radius:4px"></div>
<div class="t" style="left:383px;top:11px;font-size:12px;line-height:14px;color:#d0d0d0;letter-spacing:-0.45px;">No Mat</div>
<svg class="a" style="left:425px;top:15px;" width="12" height="8" viewBox="0 0 12 8"><path d="M1 1.5L6 6.5L11 1.5" fill="none" stroke="#d0d0d0" stroke-width="1.8"/></svg>
<svg class="a" style="left:480px;top:11px;" width="14" height="14" viewBox="0 0 14 14"><path d="M11.8 3.8A5.6 5.6 0 1 0 12.6 8.2" fill="none" stroke="#7a7a7a" stroke-width="1.6"/><path d="M9.3 6A2.6 2.6 0 1 0 9.6 8" fill="none" stroke="#7a7a7a" stroke-width="1.5"/></svg>
<div class="a" style="left:499px;top:11px;width:89px;height:15px;background:#0f0f0f;border-radius:4px"></div>
<div class="t" style="left:507px;top:11px;font-size:12px;line-height:14px;color:#d0d0d0;letter-spacing:-0.45px;">None</div>
<svg class="a" style="left:570px;top:15px;" width="12" height="8" viewBox="0 0 12 8"><path d="M1 1.5L6 6.5L11 1.5" fill="none" stroke="#d0d0d0" stroke-width="1.8"/></svg>
<div class="a" style="left:0px;top:26px;width:607px;height:1px;background:#151515;"></div>
<div class="a" style="left:0px;top:27px;width:607px;height:17px;background:#1f1f1f;"></div>
<svg class="a" style="left:9px;top:30px;" width="8" height="10" viewBox="0 0 8 10"><path d="M7 0V10L0 5Z" fill="#c8c8c8"/></svg>
<svg class="a" style="left:23px;top:30px;" width="10" height="10" viewBox="0 0 10 10"><path d="M5 0.7L9.3 5L5 9.3L0.7 5Z" fill="#7a7a7a" stroke="#b8b8b8" stroke-width="1.1"/></svg>
<svg class="a" style="left:39px;top:30px;" width="8" height="10" viewBox="0 0 8 10"><path d="M0 0V10L7 5Z" fill="#c8c8c8"/></svg>
<div class="a" style="left:121px;top:28px;width:15px;height:15px;background:#141414;border-radius:2px"></div>
<svg class="a" style="left:123px;top:28px;" width="12" height="14" viewBox="0 0 12 14"><circle cx="6" cy="8" r="4.6" fill="none" stroke="#3a8ef0" stroke-width="1.6"/><path d="M4 1.5H8M6 1.5V3.2M6 8L8.3 5.8" stroke="#3a8ef0" stroke-width="1.5"/></svg>
<svg class="a" style="left:140px;top:29px;" width="12" height="12" viewBox="0 0 12 12"><path d="M1 0V11H12M3 9L5 4L8 8L11 3" fill="none" stroke="#8a8a8a" stroke-width="1.1"/></svg>
<div class="t" style="left:160px;top:28px;font-size:12px;line-height:14px;color:#c8c8c8;letter-spacing:-0.5px;">Opacity</div>
<div class="t" style="left:270px;top:28px;font-size:12px;line-height:14px;color:#3a8ef0;letter-spacing:-0.45px;">67<span style="color:#c8c8c8">%</span></div>
<svg class="a" style="left:493px;top:28px;" width="14" height="14" viewBox="0 0 14 14"><path d="M11.8 3.8A5.6 5.6 0 1 0 12.6 8.2" fill="none" stroke="#5a5a5a" stroke-width="1.6"/><path d="M9.3 6A2.6 2.6 0 1 0 9.6 8" fill="none" stroke="#5a5a5a" stroke-width="1.5"/></svg>
<div class="a" style="left:0px;top:43px;width:607px;height:1px;background:#151515;"></div>
<div class="a" style="left:0px;top:44px;width:607px;height:17px;background:#282828;"></div>
<div class="a" style="left:7px;top:46px;width:12px;height:13px;background:#141414;"></div>
<svg class="a" style="left:7px;top:48px;" width="13" height="9" viewBox="0 0 13 9"><path d="M0.5 4.5C3.5 0 9.5 0 12.5 4.5C9.5 9 3.5 9 0.5 4.5Z" fill="#d8d8d8"/><circle cx="6.5" cy="4.5" r="2" fill="#141414"/></svg>
<div class="a" style="left:37px;top:47px;width:11px;height:11px;background:#141414;"></div>
<div class="a" style="left:52px;top:47px;width:11px;height:11px;background:#141414;"></div>
<svg class="a" style="left:74px;top:49px;" width="10" height="7" viewBox="0 0 10 7"><path d="M1 1L5 5L9 1" fill="none" stroke="#c8c8c8" stroke-width="1.6"/></svg>
<div class="a" style="left:87px;top:47px;width:12px;height:11px;background:#a9a5d6;"></div>
<div class="t" style="left:108px;top:45px;font-size:12px;line-height:14px;color:#c8c8c8;letter-spacing:-0.2px;">14</div>
<div class="a" style="left:138px;top:47px;width:12px;height:11px;background:#f4f4f4;border:1px solid #111"></div>
<div class="t" style="left:156px;top:45px;font-size:12px;line-height:14px;color:#c8c8c8;letter-spacing:-0.5px;">Adjustment Layer 1</div>
<div class="a" style="left:268px;top:45px;width:68px;height:15px;background:#0f0f0f;border-radius:4px"></div>
<div class="t" style="left:276px;top:45px;font-size:12px;line-height:14px;color:#d0d0d0;letter-spacing:-0.45px;">Normal</div>
<svg class="a" style="left:318px;top:49px;" width="12" height="8" viewBox="0 0 12 8"><path d="M1 1.5L6 6.5L11 1.5" fill="none" stroke="#d0d0d0" stroke-width="1.8"/></svg>
<div class="a" style="left:341px;top:46px;width:13px;height:13px;background:#141414;"></div>
<svg class="a" style="left:359px;top:46px;" width="13" height="12" viewBox="0 0 13 12"><circle cx="5.5" cy="6" r="4.3" fill="none" stroke="#9a9a9a" stroke-width="1.3"/><circle cx="5.5" cy="6" r="1.5" fill="#9a9a9a"/><path d="M11 1V4M11 6V8M11 10V11" stroke="#9a9a9a" stroke-width="1.3"/></svg>
<div class="a" style="left:375px;top:45px;width:68px;height:15px;background:#0f0f0f;border-radius:4px"></div>
<div class="t" style="left:383px;top:45px;font-size:12px;line-height:14px;color:#d0d0d0;letter-spacing:-0.45px;">No Mat</div>
<svg class="a" style="left:425px;top:49px;" width="12" height="8" viewBox="0 0 12 8"><path d="M1 1.5L6 6.5L11 1.5" fill="none" stroke="#d0d0d0" stroke-width="1.8"/></svg>
<svg class="a" style="left:480px;top:45px;" width="14" height="14" viewBox="0 0 14 14"><path d="M11.8 3.8A5.6 5.6 0 1 0 12.6 8.2" fill="none" stroke="#7a7a7a" stroke-width="1.6"/><path d="M9.3 6A2.6 2.6 0 1 0 9.6 8" fill="none" stroke="#7a7a7a" stroke-width="1.5"/></svg>
<div class="a" style="left:499px;top:45px;width:89px;height:15px;background:#0f0f0f;border-radius:4px"></div>
<div class="t" style="left:507px;top:45px;font-size:12px;line-height:14px;color:#d0d0d0;letter-spacing:-0.45px;">16. Null 1</div>
<svg class="a" style="left:570px;top:49px;" width="12" height="8" viewBox="0 0 12 8"><path d="M1 1.5L6 6.5L11 1.5" fill="none" stroke="#d0d0d0" stroke-width="1.8"/></svg>
<div class="a" style="left:0px;top:60px;width:607px;height:1px;background:#151515;"></div>
<div class="a" style="left:0px;top:61px;width:607px;height:17px;background:#1f1f1f;"></div>
<div class="a" style="left:6px;top:62px;width:13px;height:15px;background:#141414;"></div>
<div class="t" style="left:7px;top:61px;font-size:13px;line-height:16px;color:#b0b0b0;letter-spacing:-1px;font-family:"Liberation Serif",serif;"><i>fx</i></div>
<svg class="a" style="left:109px;top:66px;" width="10" height="7" viewBox="0 0 10 7"><path d="M1 1L5 5L9 1" fill="none" stroke="#c8c8c8" stroke-width="1.6"/></svg>
<div class="t" style="left:125px;top:62px;font-size:12px;line-height:14px;color:#c8c8c8;letter-spacing:-0.5px;">Camera Lens Blur</div>
<div class="t" style="left:270px;top:62px;font-size:12px;line-height:14px;color:#3a8ef0;letter-spacing:-0.45px;">Reset</div>
<div class="a" style="left:0px;top:77px;width:607px;height:1px;background:#151515;"></div>
<div class="a" style="left:0px;top:78px;width:607px;height:17px;background:#1f1f1f;"></div>
<svg class="a" style="left:9px;top:81px;" width="8" height="10" viewBox="0 0 8 10"><path d="M7 0V10L0 5Z" fill="#c8c8c8"/></svg>
<svg class="a" style="left:23px;top:81px;" width="10" height="10" viewBox="0 0 10 10"><path d="M5 0.7L9.3 5L5 9.3L0.7 5Z" fill="#7a7a7a" stroke="#b8b8b8" stroke-width="1.1"/></svg>
<svg class="a" style="left:39px;top:81px;" width="8" height="10" viewBox="0 0 8 10"><path d="M0 0V10L7 5Z" fill="#c8c8c8"/></svg>
<div class="a" style="left:138px;top:79px;width:15px;height:15px;background:#141414;border-radius:2px"></div>
<svg class="a" style="left:140px;top:79px;" width="12" height="14" viewBox="0 0 12 14"><circle cx="6" cy="8" r="4.6" fill="none" stroke="#3a8ef0" stroke-width="1.6"/><path d="M4 1.5H8M6 1.5V3.2M6 8L8.3 5.8" stroke="#3a8ef0" stroke-width="1.5"/></svg>
<svg class="a" style="left:157px;top:80px;" width="12" height="12" viewBox="0 0 12 12"><path d="M1 0V11H12M3 9L5 4L8 8L11 3" fill="none" stroke="#8a8a8a" stroke-width="1.1"/></svg>
<div class="t" style="left:177px;top:79px;font-size:12px;line-height:14px;color:#c8c8c8;letter-spacing:-0.5px;">Blur Radius</div>
<div class="t" style="left:270px;top:79px;font-size:12px;line-height:14px;color:#3a8ef0;letter-spacing:-0.45px;">1,5</div>
<svg class="a" style="left:493px;top:79px;" width="14" height="14" viewBox="0 0 14 14"><path d="M11.8 3.8A5.6 5.6 0 1 0 12.6 8.2" fill="none" stroke="#5a5a5a" stroke-width="1.6"/><path d="M9.3 6A2.6 2.6 0 1 0 9.6 8" fill="none" stroke="#5a5a5a" stroke-width="1.5"/></svg>
<div class="a" style="left:0px;top:94px;width:607px;height:1px;background:#151515;"></div>
<div class="a" style="left:0px;top:95px;width:607px;height:17px;background:#1f1f1f;"></div>
<div class="a" style="left:6px;top:96px;width:13px;height:15px;background:#141414;"></div>
<div class="t" style="left:7px;top:95px;font-size:13px;line-height:16px;color:#b0b0b0;letter-spacing:-1px;font-family:"Liberation Serif",serif;"><i>fx</i></div>
<svg class="a" style="left:109px;top:100px;" width="10" height="7" viewBox="0 0 10 7"><path d="M1 1L5 5L9 1" fill="none" stroke="#c8c8c8" stroke-width="1.6"/></svg>
<div class="t" style="left:125px;top:96px;font-size:12px;line-height:14px;color:#c8c8c8;letter-spacing:-0.5px;">Brightness &amp; Contrast</div>
<div class="t" style="left:270px;top:96px;font-size:12px;line-height:14px;color:#3a8ef0;letter-spacing:-0.45px;">Reset</div>
<div class="a" style="left:0px;top:111px;width:607px;height:1px;background:#151515;"></div>
<div class="a" style="left:0px;top:112px;width:607px;height:17px;background:#1f1f1f;"></div>
<svg class="a" style="left:9px;top:115px;" width="8" height="10" viewBox="0 0 8 10"><path d="M7 0V10L0 5Z" fill="#c8c8c8"/></svg>
<svg class="a" style="left:23px;top:115px;" width="10" height="10" viewBox="0 0 10 10"><path d="M5 0.7L9.3 5L5 9.3L0.7 5Z" fill="#7a7a7a" stroke="#b8b8b8" stroke-width="1.1"/></svg>
<svg class="a" style="left:39px;top:115px;" width="8" height="10" viewBox="0 0 8 10"><path d="M0 0V10L7 5Z" fill="#c8c8c8"/></svg>
<div class="a" style="left:138px;top:113px;width:15px;height:15px;background:#141414;border-radius:2px"></div>
<svg class="a" style="left:140px;top:113px;" width="12" height="14" viewBox="0 0 12 14"><circle cx="6" cy="8" r="4.6" fill="none" stroke="#3a8ef0" stroke-width="1.6"/><path d="M4 1.5H8M6 1.5V3.2M6 8L8.3 5.8" stroke="#3a8ef0" stroke-width="1.5"/></svg>
<svg class="a" style="left:157px;top:114px;" width="12" height="12" viewBox="0 0 12 12"><path d="M1 0V11H12M3 9L5 4L8 8L11 3" fill="none" stroke="#8a8a8a" stroke-width="1.1"/></svg>
<div class="t" style="left:177px;top:113px;font-size:12px;line-height:14px;color:#c8c8c8;letter-spacing:-0.5px;">Brightness</div>
<div class="t" style="left:270px;top:113px;font-size:12px;line-height:14px;color:#3a8ef0;letter-spacing:-0.45px;">-6</div>
<svg class="a" style="left:493px;top:113px;" width="14" height="14" viewBox="0 0 14 14"><path d="M11.8 3.8A5.6 5.6 0 1 0 12.6 8.2" fill="none" stroke="#5a5a5a" stroke-width="1.6"/><path d="M9.3 6A2.6 2.6 0 1 0 9.6 8" fill="none" stroke="#5a5a5a" stroke-width="1.5"/></svg>
<div class="a" style="left:0px;top:128px;width:607px;height:1px;background:#151515;"></div>
<div class="a" style="left:0px;top:129px;width:607px;height:17px;background:#282828;"></div>
<div class="a" style="left:7px;top:131px;width:12px;height:13px;background:#141414;"></div>
<svg class="a" style="left:7px;top:133px;" width="13" height="9" viewBox="0 0 13 9"><path d="M0.5 4.5C3.5 0 9.5 0 12.5 4.5C9.5 9 3.5 9 0.5 4.5Z" fill="#d8d8d8"/><circle cx="6.5" cy="4.5" r="2" fill="#141414"/></svg>
<div class="a" style="left:37px;top:132px;width:11px;height:11px;background:#141414;"></div>
<div class="a" style="left:52px;top:132px;width:11px;height:11px;background:#141414;"></div>
<svg class="a" style="left:74px;top:134px;" width="10" height="7" viewBox="0 0 10 7"><path d="M1 1L5 5L9 1" fill="none" stroke="#c8c8c8" stroke-width="1.6"/></svg>
<div class="a" style="left:87px;top:132px;width:12px;height:11px;background:#ec6cd6;"></div>
<div class="t" style="left:108px;top:130px;font-size:12px;line-height:14px;color:#c8c8c8;letter-spacing:-0.2px;">15</div>
<div class="a" style="left:138px;top:132px;width:12px;height:11px;background:#f4f4f4;border:1px solid #111"></div>
<div class="t" style="left:156px;top:130px;font-size:12px;line-height:14px;color:#c8c8c8;letter-spacing:-0.5px;">Null 2</div>
<div class="a" style="left:268px;top:130px;width:68px;height:15px;background:#0f0f0f;border-radius:4px"></div>
<div class="t" style="left:276px;top:130px;font-size:12px;line-height:14px;color:#d0d0d0;letter-spacing:-0.45px;">Normal</div>
<svg class="a" style="left:318px;top:134px;" width="12" height="8" viewBox="0 0 12 8"><path d="M1 1.5L6 6.5L11 1.5" fill="none" stroke="#d0d0d0" stroke-width="1.8"/></svg>
<div class="a" style="left:341px;top:131px;width:13px;height:13px;background:#141414;"></div>
<svg class="a" style="left:359px;top:131px;" width="13" height="12" viewBox="0 0 13 12"><circle cx="5.5" cy="6" r="4.3" fill="none" stroke="#9a9a9a" stroke-width="1.3"/><circle cx="5.5" cy="6" r="1.5" fill="#9a9a9a"/><path d="M11 1V4M11 6V8M11 10V11" stroke="#9a9a9a" stroke-width="1.3"/></svg>
<div class="a" style="left:375px;top:130px;width:68px;height:15px;background:#0f0f0f;border-radius:4px"></div>
<div class="t" style="left:383px;top:130px;font-size:12px;line-height:14px;color:#d0d0d0;letter-spacing:-0.45px;">No Mat</div>
<svg class="a" style="left:425px;top:134px;" width="12" height="8" viewBox="0 0 12 8"><path d="M1 1.5L6 6.5L11 1.5" fill="none" stroke="#d0d0d0" stroke-width="1.8"/></svg>
<svg class="a" style="left:480px;top:130px;" width="14" height="14" viewBox="0 0 14 14"><path d="M11.8 3.8A5.6 5.6 0 1 0 12.6 8.2" fill="none" stroke="#7a7a7a" stroke-width="1.6"/><path d="M9.3 6A2.6 2.6 0 1 0 9.6 8" fill="none" stroke="#7a7a7a" stroke-width="1.5"/></svg>
<div class="a" style="left:499px;top:130px;width:89px;height:15px;background:#0f0f0f;border-radius:4px"></div>
<div class="t" style="left:507px;top:130px;font-size:12px;line-height:14px;color:#d0d0d0;letter-spacing:-0.45px;">None</div>
<svg class="a" style="left:570px;top:134px;" width="12" height="8" viewBox="0 0 12 8"><path d="M1 1.5L6 6.5L11 1.5" fill="none" stroke="#d0d0d0" stroke-width="1.8"/></svg>
<div class="a" style="left:0px;top:145px;width:607px;height:1px;background:#151515;"></div>
<div class="a" style="left:0px;top:146px;width:607px;height:17px;background:#1f1f1f;"></div>
<svg class="a" style="left:9px;top:149px;" width="8" height="10" viewBox="0 0 8 10"><path d="M7 0V10L0 5Z" fill="#c8c8c8"/></svg>
<svg class="a" style="left:23px;top:149px;" width="10" height="10" viewBox="0 0 10 10"><path d="M5 0.7L9.3 5L5 9.3L0.7 5Z" fill="#7a7a7a" stroke="#b8b8b8" stroke-width="1.1"/></svg>
<svg class="a" style="left:39px;top:149px;" width="8" height="10" viewBox="0 0 8 10"><path d="M0 0V10L7 5Z" fill="#c8c8c8"/></svg>
<div class="a" style="left:121px;top:147px;width:15px;height:15px;background:#141414;border-radius:2px"></div>
<svg class="a" style="left:123px;top:147px;" width="12" height="14" viewBox="0 0 12 14"><circle cx="6" cy="8" r="4.6" fill="none" stroke="#3a8ef0" stroke-width="1.6"/><path d="M4 1.5H8M6 1.5V3.2M6 8L8.3 5.8" stroke="#3a8ef0" stroke-width="1.5"/></svg>
<svg class="a" style="left:140px;top:148px;" width="12" height="12" viewBox="0 0 12 12"><path d="M1 0V11H12M3 9L5 4L8 8L11 3" fill="none" stroke="#8a8a8a" stroke-width="1.1"/></svg>
<div class="t" style="left:160px;top:147px;font-size:12px;line-height:14px;color:#c8c8c8;letter-spacing:-0.5px;">Scale</div>
<svg class="a" style="left:269px;top:150px;" width="15" height="9" viewBox="0 0 15 9"><path d="M5 1H3A3.5 3.5 0 0 0 3 8H5M10 1H12A3.5 3.5 0 0 1 12 8H10M4 4.5H11" fill="none" stroke="#c0c0c0" stroke-width="1.4"/></svg>
<div class="t" style="left:287px;top:147px;font-size:12px;line-height:14px;color:#3a8ef0;letter-spacing:-0.45px;">90,8,90,8<span style="color:#c8c8c8">%</span></div>
<svg class="a" style="left:493px;top:147px;" width="14" height="14" viewBox="0 0 14 14"><path d="M11.8 3.8A5.6 5.6 0 1 0 12.6 8.2" fill="none" stroke="#5a5a5a" stroke-width="1.6"/><path d="M9.3 6A2.6 2.6 0 1 0 9.6 8" fill="none" stroke="#5a5a5a" stroke-width="1.5"/></svg>
<div class="a" style="left:0px;top:162px;width:607px;height:1px;background:#151515;"></div>
<div class="a" style="left:0px;top:163px;width:607px;height:17px;background:#282828;"></div>
<div class="a" style="left:7px;top:165px;width:12px;height:13px;background:#141414;"></div>
<svg class="a" style="left:7px;top:167px;" width="13" height="9" viewBox="0 0 13 9"><path d="M0.5 4.5C3.5 0 9.5 0 12.5 4.5C9.5 9 3.5 9 0.5 4.5Z" fill="#d8d8d8"/><circle cx="6.5" cy="4.5" r="2" fill="#141414"/></svg>
<div class="a" style="left:37px;top:166px;width:11px;height:11px;background:#141414;"></div>
<div class="a" style="left:52px;top:166px;width:11px;height:11px;background:#141414;"></div>
<svg class="a" style="left:74px;top:168px;" width="10" height="7" viewBox="0 0 10 7"><path d="M1 1L5 5L9 1" fill="none" stroke="#c8c8c8" stroke-width="1.6"/></svg>
<div class="a" style="left:87px;top:166px;width:12px;height:11px;background:#ec6cd6;"></div>
<div class="t" style="left:108px;top:164px;font-size:12px;line-height:14px;color:#c8c8c8;letter-spacing:-0.2px;">16</div>
<div class="a" style="left:138px;top:166px;width:12px;height:11px;background:#f4f4f4;border:1px solid #111"></div>
<div class="t" style="left:156px;top:164px;font-size:12px;line-height:14px;color:#c8c8c8;letter-spacing:-0.5px;">Null 1</div>
<div class="a" style="left:268px;top:164px;width:68px;height:15px;background:#0f0f0f;border-radius:4px"></div>
<div class="t" style="left:276px;top:164px;font-size:12px;line-height:14px;color:#d0d0d0;letter-spacing:-0.45px;">Normal</div>
<svg class="a" style="left:318px;top:168px;" width="12" height="8" viewBox="0 0 12 8"><path d="M1 1.5L6 6.5L11 1.5" fill="none" stroke="#d0d0d0" stroke-width="1.8"/></svg>
<div class="a" style="left:341px;top:165px;width:13px;height:13px;background:#141414;"></div>
<svg class="a" style="left:359px;top:165px;" width="13" height="12" viewBox="0 0 13 12"><circle cx="5.5" cy="6" r="4.3" fill="none" stroke="#9a9a9a" stroke-width="1.3"/><circle cx="5.5" cy="6" r="1.5" fill="#9a9a9a"/><path d="M11 1V4M11 6V8M11 10V11" stroke="#9a9a9a" stroke-width="1.3"/></svg>
<div class="a" style="left:375px;top:164px;width:68px;height:15px;background:#0f0f0f;border-radius:4px"></div>
<div class="t" style="left:383px;top:164px;font-size:12px;line-height:14px;color:#d0d0d0;letter-spacing:-0.45px;">No Mat</div>
<svg class="a" style="left:425px;top:168px;" width="12" height="8" viewBox="0 0 12 8"><path d="M1 1.5L6 6.5L11 1.5" fill="none" stroke="#d0d0d0" stroke-width="1.8"/></svg>
<svg class="a" style="left:480px;top:164px;" width="14" height="14" viewBox="0 0 14 14"><path d="M11.8 3.8A5.6 5.6 0 1 0 12.6 8.2" fill="none" stroke="#7a7a7a" stroke-width="1.6"/><path d="M9.3 6A2.6 2.6 0 1 0 9.6 8" fill="none" stroke="#7a7a7a" stroke-width="1.5"/></svg>
<div class="a" style="left:499px;top:164px;width:89px;height:15px;background:#0f0f0f;border-radius:4px"></div>
<div class="t" style="left:507px;top:164px;font-size:12px;line-height:14px;color:#d0d0d0;letter-spacing:-0.45px;">15. Null 2</div>
<svg class="a" style="left:570px;top:168px;" width="12" height="8" viewBox="0 0 12 8"><path d="M1 1.5L6 6.5L11 1.5" fill="none" stroke="#d0d0d0" stroke-width="1.8"/></svg>
<div class="a" style="left:0px;top:179px;width:607px;height:1px;background:#151515;"></div>
<div class="a" style="left:0px;top:180px;width:607px;height:17px;background:#1f1f1f;"></div>
<svg class="a" style="left:9px;top:183px;" width="8" height="10" viewBox="0 0 8 10"><path d="M7 0V10L0 5Z" fill="#c8c8c8"/></svg>
<svg class="a" style="left:23px;top:183px;" width="10" height="10" viewBox="0 0 10 10"><path d="M5 0.7L9.3 5L5 9.3L0.7 5Z" fill="#7a7a7a" stroke="#b8b8b8" stroke-width="1.1"/></svg>
<svg class="a" style="left:39px;top:183px;" width="8" height="10" viewBox="0 0 8 10"><path d="M0 0V10L7 5Z" fill="#7a7a7a"/></svg>
<div class="a" style="left:121px;top:181px;width:15px;height:15px;background:#141414;border-radius:2px"></div>
<svg class="a" style="left:123px;top:181px;" width="12" height="14" viewBox="0 0 12 14"><circle cx="6" cy="8" r="4.6" fill="none" stroke="#3a8ef0" stroke-width="1.6"/><path d="M4 1.5H8M6 1.5V3.2M6 8L8.3 5.8" stroke="#3a8ef0" stroke-width="1.5"/></svg>
<svg class="a" style="left:140px;top:182px;" width="12" height="12" viewBox="0 0 12 12"><path d="M1 0V11H12M3 9L5 4L8 8L11 3" fill="none" stroke="#8a8a8a" stroke-width="1.1"/></svg>
<div class="t" style="left:160px;top:181px;font-size:12px;line-height:14px;color:#c8c8c8;letter-spacing:-0.5px;">Scale</div>
<svg class="a" style="left:269px;top:184px;" width="15" height="9" viewBox="0 0 15 9"><path d="M5 1H3A3.5 3.5 0 0 0 3 8H5M10 1H12A3.5 3.5 0 0 1 12 8H10M4 4.5H11" fill="none" stroke="#c0c0c0" stroke-width="1.4"/></svg>
<div class="t" style="left:287px;top:181px;font-size:12px;line-height:14px;color:#3a8ef0;letter-spacing:-0.45px;">100,0,100,0<span style="color:#c8c8c8">%</span></div>
<svg class="a" style="left:493px;top:181px;" width="14" height="14" viewBox="0 0 14 14"><path d="M11.8 3.8A5.6 5.6 0 1 0 12.6 8.2" fill="none" stroke="#5a5a5a" stroke-width="1.6"/><path d="M9.3 6A2.6 2.6 0 1 0 9.6 8" fill="none" stroke="#5a5a5a" stroke-width="1.5"/></svg>
<div class="a" style="left:0px;top:196px;width:607px;height:1px;background:#151515;"></div>
<div class="a" style="left:0px;top:197px;width:607px;height:17px;background:#282828;"></div>
<div class="a" style="left:7px;top:199px;width:12px;height:13px;background:#141414;"></div>
<svg class="a" style="left:7px;top:201px;" width="13" height="9" viewBox="0 0 13 9"><path d="M0.5 4.5C3.5 0 9.5 0 12.5 4.5C9.5 9 3.5 9 0.5 4.5Z" fill="#d8d8d8"/><circle cx="6.5" cy="4.5" r="2" fill="#141414"/></svg>
<div class="a" style="left:37px;top:200px;width:11px;height:11px;background:#141414;"></div>
<div class="a" style="left:52px;top:200px;width:11px;height:11px;background:#141414;"></div>
<svg class="a" style="left:75px;top:200px;" width="7" height="10" viewBox="0 0 7 10"><path d="M1 1L5 5L1 9" fill="none" stroke="#c8c8c8" stroke-width="1.6"/></svg>
<div class="a" style="left:87px;top:200px;width:12px;height:11px;background:#d13b3b;"></div>
<div class="t" style="left:108px;top:198px;font-size:12px;line-height:14px;color:#c8c8c8;letter-spacing:-0.2px;">17</div>
<div class="a" style="left:138px;top:200px;width:12px;height:11px;background:#8a8a8a;border:1px solid #111"></div>
<div class="t" style="left:156px;top:198px;font-size:12px;line-height:14px;color:#c8c8c8;letter-spacing:-0.5px;">Gray Solid 2</div>
<div class="a" style="left:268px;top:198px;width:68px;height:15px;background:#0f0f0f;border-radius:4px"></div>
<div class="t" style="left:276px;top:198px;font-size:12px;line-height:14px;color:#d0d0d0;letter-spacing:-0.45px;">Overlay</div>
<svg class="a" style="left:318px;top:202px;" width="12" height="8" viewBox="0 0 12 8"><path d="M1 1.5L6 6.5L11 1.5" fill="none" stroke="#d0d0d0" stroke-width="1.8"/></svg>
<div class="a" style="left:341px;top:199px;width:13px;height:13px;background:#141414;"></div>
<svg class="a" style="left:359px;top:199px;" width="13" height="12" viewBox="0 0 13 12"><circle cx="5.5" cy="6" r="4.3" fill="none" stroke="#9a9a9a" stroke-width="1.3"/><circle cx="5.5" cy="6" r="1.5" fill="#9a9a9a"/><path d="M11 1V4M11 6V8M11 10V11" stroke="#9a9a9a" stroke-width="1.3"/></svg>
<div class="a" style="left:375px;top:198px;width:68px;height:15px;background:#0f0f0f;border-radius:4px"></div>
<div class="t" style="left:383px;top:198px;font-size:12px;line-height:14px;color:#d0d0d0;letter-spacing:-0.45px;">No Mat</div>
<svg class="a" style="left:425px;top:202px;" width="12" height="8" viewBox="0 0 12 8"><path d="M1 1.5L6 6.5L11 1.5" fill="none" stroke="#d0d0d0" stroke-width="1.8"/></svg>
<svg class="a" style="left:480px;top:198px;" width="14" height="14" viewBox="0 0 14 14"><path d="M11.8 3.8A5.6 5.6 0 1 0 12.6 8.2" fill="none" stroke="#7a7a7a" stroke-width="1.6"/><path d="M9.3 6A2.6 2.6 0 1 0 9.6 8" fill="none" stroke="#7a7a7a" stroke-width="1.5"/></svg>
<div class="a" style="left:499px;top:198px;width:89px;height:15px;background:#0f0f0f;border-radius:4px"></div>
<div class="t" style="left:507px;top:198px;font-size:12px;line-height:14px;color:#d0d0d0;letter-spacing:-0.45px;">16. Null 1</div>
<svg class="a" style="left:570px;top:202px;" width="12" height="8" viewBox="0 0 12 8"><path d="M1 1.5L6 6.5L11 1.5" fill="none" stroke="#d0d0d0" stroke-width="1.8"/></svg>
<div class="a" style="left:0px;top:213px;width:607px;height:1px;background:#151515;"></div>
<div class="a" style="left:0px;top:214px;width:607px;height:17px;background:#282828;"></div>
<div class="a" style="left:7px;top:216px;width:12px;height:13px;background:#141414;"></div>
<svg class="a" style="left:7px;top:218px;" width="13" height="9" viewBox="0 0 13 9"><path d="M0.5 4.5C3.5 0 9.5 0 12.5 4.5C9.5 9 3.5 9 0.5 4.5Z" fill="#d8d8d8"/><circle cx="6.5" cy="4.5" r="2" fill="#141414"/></svg>
<div class="a" style="left:37px;top:217px;width:11px;height:11px;background:#141414;"></div>
<div class="a" style="left:52px;top:217px;width:11px;height:11px;background:#141414;"></div>
<svg class="a" style="left:74px;top:219px;" width="10" height="7" viewBox="0 0 10 7"><path d="M1 1L5 5L9 1" fill="none" stroke="#c8c8c8" stroke-width="1.6"/></svg>
<div class="a" style="left:87px;top:217px;width:12px;height:11px;background:#d13b3b;"></div>
<div class="t" style="left:108px;top:215px;font-size:12px;line-height:14px;color:#c8c8c8;letter-spacing:-0.2px;">18</div>
<div class="t" style="left:139px;top:214px;font-size:13px;line-height:16px;color:#a0a0a0;letter-spacing:0px;font-family:"Liberation Serif",serif;">T</div>
<div class="t" style="left:156px;top:215px;font-size:12px;line-height:14px;color:#c8c8c8;letter-spacing:-0.5px;">Typewriter Text</div>
<div class="a" style="left:268px;top:215px;width:68px;height:15px;background:#0f0f0f;border-radius:4px"></div>
<div class="t" style="left:276px;top:215px;font-size:12px;line-height:14px;color:#d0d0d0;letter-spacing:-0.45px;">Normal</div>
<svg class="a" style="left:318px;top:219px;" width="12" height="8" viewBox="0 0 12 8"><path d="M1 1.5L6 6.5L11 1.5" fill="none" stroke="#d0d0d0" stroke-width="1.8"/></svg>
<div class="a" style="left:341px;top:216px;width:13px;height:13px;background:#141414;"></div>
<svg class="a" style="left:359px;top:216px;" width="13" height="12" viewBox="0 0 13 12"><circle cx="5.5" cy="6" r="4.3" fill="none" stroke="#9a9a9a" stroke-width="1.3"/><circle cx="5.5" cy="6" r="1.5" fill="#9a9a9a"/><path d="M11 1V4M11 6V8M11 10V11" stroke="#9a9a9a" stroke-width="1.3"/></svg>
<div class="a" style="left:375px;top:215px;width:68px;height:15px;background:#0f0f0f;border-radius:4px"></div>
<div class="t" style="left:383px;top:215px;font-size:12px;line-height:14px;color:#d0d0d0;letter-spacing:-0.45px;">No Mat</div>
<svg class="a" style="left:425px;top:219px;" width="12" height="8" viewBox="0 0 12 8"><path d="M1 1.5L6 6.5L11 1.5" fill="none" stroke="#d0d0d0" stroke-width="1.8"/></svg>
<svg class="a" style="left:480px;top:215px;" width="14" height="14" viewBox="0 0 14 14"><path d="M11.8 3.8A5.6 5.6 0 1 0 12.6 8.2" fill="none" stroke="#7a7a7a" stroke-width="1.6"/><path d="M9.3 6A2.6 2.6 0 1 0 9.6 8" fill="none" stroke="#7a7a7a" stroke-width="1.5"/></svg>
<div class="a" style="left:499px;top:215px;width:89px;height:15px;background:#0f0f0f;border-radius:4px"></div>
<div class="t" style="left:507px;top:215px;font-size:12px;line-height:14px;color:#d0d0d0;letter-spacing:-0.45px;">16. Null 1</div>
<svg class="a" style="left:570px;top:219px;" width="12" height="8" viewBox="0 0 12 8"><path d="M1 1.5L6 6.5L11 1.5" fill="none" stroke="#d0d0d0" stroke-width="1.8"/></svg>
<div class="a" style="left:0px;top:230px;width:607px;height:1px;background:#151515;"></div>
<div class="a" style="left:0px;top:231px;width:607px;height:17px;background:#1f1f1f;"></div>
<svg class="a" style="left:6px;top:235px;" width="13" height="9" viewBox="0 0 13 9"><path d="M0.5 4.5C3.5 0 9.5 0 12.5 4.5C9.5 9 3.5 9 0.5 4.5Z" fill="#9a9a9a"/><circle cx="6.5" cy="4.5" r="2" fill="#1f1f1f"/></svg>
<svg class="a" style="left:126px;top:236px;" width="10" height="7" viewBox="0 0 10 7"><path d="M1 1L5 5L9 1" fill="none" stroke="#c8c8c8" stroke-width="1.6"/></svg>
<div class="t" style="left:142px;top:232px;font-size:12px;line-height:14px;color:#c8c8c8;letter-spacing:-0.5px;">Range Selector 1</div>
<div class="a" style="left:0px;top:247px;width:607px;height:1px;background:#151515;"></div>
<div class="a" style="left:0px;top:248px;width:607px;height:17px;background:#1f1f1f;"></div>
<svg class="a" style="left:9px;top:251px;" width="8" height="10" viewBox="0 0 8 10"><path d="M7 0V10L0 5Z" fill="#c8c8c8"/></svg>
<svg class="a" style="left:23px;top:251px;" width="10" height="10" viewBox="0 0 10 10"><path d="M5 0.7L9.3 5L5 9.3L0.7 5Z" fill="#7a7a7a" stroke="#b8b8b8" stroke-width="1.1"/></svg>
<svg class="a" style="left:39px;top:251px;" width="8" height="10" viewBox="0 0 8 10"><path d="M0 0V10L7 5Z" fill="#7a7a7a"/></svg>
<div class="a" style="left:155px;top:249px;width:15px;height:15px;background:#141414;border-radius:2px"></div>
<svg class="a" style="left:157px;top:249px;" width="12" height="14" viewBox="0 0 12 14"><circle cx="6" cy="8" r="4.6" fill="none" stroke="#3a8ef0" stroke-width="1.6"/><path d="M4 1.5H8M6 1.5V3.2M6 8L8.3 5.8" stroke="#3a8ef0" stroke-width="1.5"/></svg>
<svg class="a" style="left:174px;top:250px;" width="12" height="12" viewBox="0 0 12 12"><path d="M1 0V11H12M3 9L5 4L8 8L11 3" fill="none" stroke="#8a8a8a" stroke-width="1.1"/></svg>
<div class="t" style="left:194px;top:249px;font-size:12px;line-height:14px;color:#c8c8c8;letter-spacing:-0.5px;">Offset</div>
<div class="t" style="left:270px;top:249px;font-size:12px;line-height:14px;color:#3a8ef0;letter-spacing:-0.45px;">100<span style="color:#c8c8c8">%</span></div>
<svg class="a" style="left:493px;top:249px;" width="14" height="14" viewBox="0 0 14 14"><path d="M11.8 3.8A5.6 5.6 0 1 0 12.6 8.2" fill="none" stroke="#5a5a5a" stroke-width="1.6"/><path d="M9.3 6A2.6 2.6 0 1 0 9.6 8" fill="none" stroke="#5a5a5a" stroke-width="1.5"/></svg>
<div class="a" style="left:0px;top:264px;width:607px;height:1px;background:#151515;"></div>
<div class="a" style="left:0px;top:265px;width:607px;height:17px;background:#282828;"></div>
<div class="a" style="left:7px;top:267px;width:12px;height:13px;background:#141414;"></div>
<svg class="a" style="left:7px;top:269px;" width="13" height="9" viewBox="0 0 13 9"><path d="M0.5 4.5C3.5 0 9.5 0 12.5 4.5C9.5 9 3.5 9 0.5 4.5Z" fill="#d8d8d8"/><circle cx="6.5" cy="4.5" r="2" fill="#141414"/></svg>
<div class="a" style="left:37px;top:268px;width:11px;height:11px;background:#141414;"></div>
<div class="a" style="left:52px;top:268px;width:11px;height:11px;background:#141414;"></div>
<svg class="a" style="left:75px;top:268px;" width="7" height="10" viewBox="0 0 7 10"><path d="M1 1L5 5L1 9" fill="none" stroke="#c8c8c8" stroke-width="1.6"/></svg>
<div class="a" style="left:87px;top:268px;width:12px;height:11px;background:#a9a5d6;"></div>
<div class="t" style="left:108px;top:266px;font-size:12px;line-height:14px;color:#c8c8c8;letter-spacing:-0.2px;">19</div>
<div class="a" style="left:138px;top:268px;width:12px;height:11px;background:#f4f4f4;"></div>
<svg class="a" style="left:139px;top:269px;" width="10" height="9" viewBox="0 0 10 9"><rect x="1" y="1" width="8" height="7" fill="#2d6fd6"/><path d="M2 7L5 3L8 7" fill="#ffffff"/></svg>
<div class="t" style="left:156px;top:266px;font-size:12px;line-height:14px;color:#c8c8c8;letter-spacing:-0.5px;">Texture</div>
<div class="a" style="left:268px;top:266px;width:68px;height:15px;background:#0f0f0f;border-radius:4px"></div>
<div class="t" style="left:276px;top:266px;font-size:12px;line-height:14px;color:#d0d0d0;letter-spacing:-0.45px;">Multipl</div>
<svg class="a" style="left:318px;top:270px;" width="12" height="8" viewBox="0 0 12 8"><path d="M1 1.5L6 6.5L11 1.5" fill="none" stroke="#d0d0d0" stroke-width="1.8"/></svg>
<div class="a" style="left:341px;top:267px;width:13px;height:13px;background:#141414;"></div>
<svg class="a" style="left:359px;top:267px;" width="13" height="12" viewBox="0 0 13 12"><circle cx="5.5" cy="6" r="4.3" fill="none" stroke="#9a9a9a" stroke-width="1.3"/><circle cx="5.5" cy="6" r="1.5" fill="#9a9a9a"/><path d="M11 1V4M11 6V8M11 10V11" stroke="#9a9a9a" stroke-width="1.3"/></svg>
<div class="a" style="left:375px;top:266px;width:68px;height:15px;background:#0f0f0f;border-radius:4px"></div>
<div class="t" style="left:383px;top:266px;font-size:12px;line-height:14px;color:#d0d0d0;letter-spacing:-0.45px;">No Mat</div>
<svg class="a" style="left:425px;top:270px;" width="12" height="8" viewBox="0 0 12 8"><path d="M1 1.5L6 6.5L11 1.5" fill="none" stroke="#d0d0d0" stroke-width="1.8"/></svg>
<svg class="a" style="left:480px;top:266px;" width="14" height="14" viewBox="0 0 14 14"><path d="M11.8 3.8A5.6 5.6 0 1 0 12.6 8.2" fill="none" stroke="#7a7a7a" stroke-width="1.6"/><path d="M9.3 6A2.6 2.6 0 1 0 9.6 8" fill="none" stroke="#7a7a7a" stroke-width="1.5"/></svg>
<div class="a" style="left:499px;top:266px;width:89px;height:15px;background:#0f0f0f;border-radius:4px"></div>
<div class="t" style="left:507px;top:266px;font-size:12px;line-height:14px;color:#d0d0d0;letter-spacing:-0.45px;">16. Null 1</div>
<svg class="a" style="left:570px;top:270px;" width="12" height="8" viewBox="0 0 12 8"><path d="M1 1.5L6 6.5L11 1.5" fill="none" stroke="#d0d0d0" stroke-width="1.8"/></svg>
<div class="a" style="left:0px;top:281px;width:607px;height:1px;background:#151515;"></div>
<div class="a" style="left:0px;top:282px;width:607px;height:17px;background:#282828;"></div>
<div class="a" style="left:7px;top:284px;width:12px;height:13px;background:#141414;"></div>
<svg class="a" style="left:7px;top:286px;" width="13" height="9" viewBox="0 0 13 9"><path d="M0.5 4.5C3.5 0 9.5 0 12.5 4.5C9.5 9 3.5 9 0.5 4.5Z" fill="#d8d8d8"/><circle cx="6.5" cy="4.5" r="2" fill="#141414"/></svg>
<div class="a" style="left:37px;top:285px;width:11px;height:11px;background:#141414;"></div>
<div class="a" style="left:52px;top:285px;width:11px;height:11px;background:#141414;"></div>
<svg class="a" style="left:75px;top:285px;" width="7" height="10" viewBox="0 0 7 10"><path d="M1 1L5 5L1 9" fill="none" stroke="#c8c8c8" stroke-width="1.6"/></svg>
<div class="a" style="left:87px;top:285px;width:12px;height:11px;background:#a9a5d6;"></div>
<div class="t" style="left:108px;top:283px;font-size:12px;line-height:14px;color:#c8c8c8;letter-spacing:-0.2px;">20</div>
<div class="a" style="left:138px;top:285px;width:12px;height:11px;background:#f4f4f4;"></div>
<svg class="a" style="left:139px;top:286px;" width="10" height="9" viewBox="0 0 10 9"><rect x="1" y="1" width="8" height="7" fill="#2d6fd6"/><path d="M2 7L5 3L8 7" fill="#ffffff"/></svg>
<div class="t" style="left:156px;top:283px;font-size:12px;line-height:14px;color:#c8c8c8;letter-spacing:-0.5px;">typewriter</div>
<div class="a" style="left:268px;top:283px;width:68px;height:15px;background:#0f0f0f;border-radius:4px"></div>
<div class="t" style="left:276px;top:283px;font-size:12px;line-height:14px;color:#d0d0d0;letter-spacing:-0.45px;">Screen</div>
<svg class="a" style="left:318px;top:287px;" width="12" height="8" viewBox="0 0 12 8"><path d="M1 1.5L6 6.5L11 1.5" fill="none" stroke="#d0d0d0" stroke-width="1.8"/></svg>
<div class="a" style="left:341px;top:284px;width:13px;height:13px;background:#141414;"></div>
<svg class="a" style="left:359px;top:284px;" width="13" height="12" viewBox="0 0 13 12"><circle cx="5.5" cy="6" r="4.3" fill="none" stroke="#9a9a9a" stroke-width="1.3"/><circle cx="5.5" cy="6" r="1.5" fill="#9a9a9a"/><path d="M11 1V4M11 6V8M11 10V11" stroke="#9a9a9a" stroke-width="1.3"/></svg>
<div class="a" style="left:375px;top:283px;width:68px;height:15px;background:#0f0f0f;border-radius:4px"></div>
<div class="t" style="left:383px;top:283px;font-size:12px;line-height:14px;color:#d0d0d0;letter-spacing:-0.45px;">No Mat</div>
<svg class="a" style="left:425px;top:287px;" width="12" height="8" viewBox="0 0 12 8"><path d="M1 1.5L6 6.5L11 1.5" fill="none" stroke="#d0d0d0" stroke-width="1.8"/></svg>
<svg class="a" style="left:480px;top:283px;" width="14" height="14" viewBox="0 0 14 14"><path d="M11.8 3.8A5.6 5.6 0 1 0 12.6 8.2" fill="none" stroke="#7a7a7a" stroke-width="1.6"/><path d="M9.3 6A2.6 2.6 0 1 0 9.6 8" fill="none" stroke="#7a7a7a" stroke-width="1.5"/></svg>
<div class="a" style="left:499px;top:283px;width:89px;height:15px;background:#0f0f0f;border-radius:4px"></div>
<div class="t" style="left:507px;top:283px;font-size:12px;line-height:14px;color:#d0d0d0;letter-spacing:-0.45px;">16. Null 1</div>
<svg class="a" style="left:570px;top:287px;" width="12" height="8" viewBox="0 0 12 8"><path d="M1 1.5L6 6.5L11 1.5" fill="none" stroke="#d0d0d0" stroke-width="1.8"/></svg>
<div class="a" style="left:0px;top:298px;width:607px;height:1px;background:#151515;"></div>
</div>
<div class="a" style="left:609px;top:657px;width:1296px;height:56px;background:#1d1d1d;"></div>
<div class="a" style="left:612px;top:664px;width:1286px;height:9px;background:#5f5f5f;"></div>
<svg class="a" style="left:609px;top:664px;" width="7" height="10" viewBox="0 0 7 10"><path d="M7 0H5A5 5 0 0 0 5 10H7Z" fill="#3a8ef0"/></svg>
<svg class="a" style="left:1895px;top:664px;" width="7" height="10" viewBox="0 0 7 10"><path d="M0 0H2A5 5 0 0 1 2 10H0Z" fill="#3a8ef0"/></svg>
<div class="a" style="left:955px;top:664px;width:1px;height:9px;background:#5a8ad0;"></div>
<div class="a" style="left:616px;top:687px;width:1px;height:6px;background:#c8c8c8;"></div>
<div class="a" style="left:609px;top:673px;width:40px;height:18px;overflow:hidden">
<div class="t" style="left:-4px;top:1px;font-size:11px;line-height:13px;color:#c8c8c8;letter-spacing:-0.3px;">0:00f</div>
</div>
<div class="a" style="left:680px;top:687px;width:1px;height:6px;background:#c8c8c8;"></div>
<div class="t" style="left:666px;top:675px;font-size:11px;line-height:13px;color:#c8c8c8;letter-spacing:-0.3px;">00:30f</div>
<div class="a" style="left:744px;top:687px;width:1px;height:6px;background:#c8c8c8;"></div>
<div class="t" style="left:730px;top:675px;font-size:11px;line-height:13px;color:#c8c8c8;letter-spacing:-0.3px;">01:00f</div>
<div class="a" style="left:808px;top:687px;width:1px;height:6px;background:#c8c8c8;"></div>
<div class="t" style="left:794px;top:675px;font-size:11px;line-height:13px;color:#c8c8c8;letter-spacing:-0.3px;">01:30f</div>
<div class="a" style="left:872px;top:687px;width:1px;height:6px;background:#c8c8c8;"></div>
<div class="t" style="left:858px;top:675px;font-size:11px;line-height:13px;color:#c8c8c8;letter-spacing:-0.3px;">02:00f</div>
<div class="a" style="left:936px;top:687px;width:1px;height:6px;background:#c8c8c8;"></div>
<div class="t" style="left:922px;top:675px;font-size:11px;line-height:13px;color:#c8c8c8;letter-spacing:-0.3px;">02:30f</div>
<div class="a" style="left:1000px;top:687px;width:1px;height:6px;background:#c8c8c8;"></div>
<div class="t" style="left:986px;top:675px;font-size:11px;line-height:13px;color:#c8c8c8;letter-spacing:-0.3px;">03:00f</div>
<div class="a" style="left:1063px;top:687px;width:1px;height:6px;background:#c8c8c8;"></div>
<div class="t" style="left:1049px;top:675px;font-size:11px;line-height:13px;color:#c8c8c8;letter-spacing:-0.3px;">03:30f</div>
<div class="a" style="left:1127px;top:687px;width:1px;height:6px;background:#c8c8c8;"></div>
<div class="t" style="left:1113px;top:675px;font-size:11px;line-height:13px;color:#c8c8c8;letter-spacing:-0.3px;">04:00f</div>
<div class="a" style="left:1191px;top:687px;width:1px;height:6px;background:#c8c8c8;"></div>
<div class="t" style="left:1177px;top:675px;font-size:11px;line-height:13px;color:#c8c8c8;letter-spacing:-0.3px;">04:30f</div>
<div class="a" style="left:1255px;top:687px;width:1px;height:6px;background:#c8c8c8;"></div>
<div class="t" style="left:1241px;top:675px;font-size:11px;line-height:13px;color:#c8c8c8;letter-spacing:-0.3px;">05:00f</div>
<div class="a" style="left:1319px;top:687px;width:1px;height:6px;background:#c8c8c8;"></div>
<div class="t" style="left:1305px;top:675px;font-size:11px;line-height:13px;color:#c8c8c8;letter-spacing:-0.3px;">05:30f</div>
<div class="a" style="left:1383px;top:687px;width:1px;height:6px;background:#c8c8c8;"></div>
<div class="t" style="left:1369px;top:675px;font-size:11px;line-height:13px;color:#c8c8c8;letter-spacing:-0.3px;">06:00f</div>
<div class="a" style="left:1447px;top:687px;width:1px;height:6px;background:#c8c8c8;"></div>
<div class="t" style="left:1433px;top:675px;font-size:11px;line-height:13px;color:#c8c8c8;letter-spacing:-0.3px;">06:30f</div>
<div class="a" style="left:1511px;top:687px;width:1px;height:6px;background:#c8c8c8;"></div>
<div class="t" style="left:1497px;top:675px;font-size:11px;line-height:13px;color:#c8c8c8;letter-spacing:-0.3px;">07:00f</div>
<div class="a" style="left:1574px;top:687px;width:1px;height:6px;background:#c8c8c8;"></div>
<div class="t" style="left:1560px;top:675px;font-size:11px;line-height:13px;color:#c8c8c8;letter-spacing:-0.3px;">07:30f</div>
<div class="a" style="left:1638px;top:687px;width:1px;height:6px;background:#c8c8c8;"></div>
<div class="t" style="left:1624px;top:675px;font-size:11px;line-height:13px;color:#c8c8c8;letter-spacing:-0.3px;">08:00f</div>
<div class="a" style="left:1702px;top:687px;width:1px;height:6px;background:#c8c8c8;"></div>
<div class="t" style="left:1688px;top:675px;font-size:11px;line-height:13px;color:#c8c8c8;letter-spacing:-0.3px;">08:30f</div>
<div class="a" style="left:1766px;top:687px;width:1px;height:6px;background:#c8c8c8;"></div>
<div class="t" style="left:1752px;top:675px;font-size:11px;line-height:13px;color:#c8c8c8;letter-spacing:-0.3px;">09:00f</div>
<div class="a" style="left:1830px;top:687px;width:1px;height:6px;background:#c8c8c8;"></div>
<div class="t" style="left:1816px;top:675px;font-size:11px;line-height:13px;color:#c8c8c8;letter-spacing:-0.3px;">09:30f</div>
<div class="a" style="left:1894px;top:687px;width:1px;height:6px;background:#c8c8c8;"></div>
<div class="t" style="left:1880px;top:675px;font-size:11px;line-height:13px;color:#c8c8c8;letter-spacing:-0.3px;">10:00</div>
<div class="a" style="left:1901px;top:673px;width:19px;height:20px;background:#1d1d1d;"></div>
<div class="a" style="left:612px;top:694px;width:1286px;height:15px;background:#6a6a6a;"></div>
<svg class="a" style="left:610px;top:694px;" width="6" height="15" viewBox="0 0 6 15"><path d="M6 0H4A4 4 0 0 0 0 4V11A4 4 0 0 0 4 15H6Z" fill="#3a8ef0"/></svg>
<svg class="a" style="left:1894px;top:694px;" width="6" height="15" viewBox="0 0 6 15"><path d="M0 0H2A4 4 0 0 1 6 4V11A4 4 0 0 1 2 15H0Z" fill="#3a8ef0"/></svg>
<div class="a" style="left:616px;top:709px;width:1280px;height:4px;background:#1e35d8;"></div>
<div class="a" style="left:643px;top:709px;width:3px;height:4px;background:#2ec22e;"></div>
<div class="a" style="left:766px;top:709px;width:3px;height:4px;background:#2ec22e;"></div>
<div class="a" style="left:771px;top:709px;width:2px;height:4px;background:#2ec22e;"></div>
<div class="a" style="left:786px;top:709px;width:2px;height:4px;background:#2ec22e;"></div>
<div class="a" style="left:811px;top:709px;width:2px;height:4px;background:#2ec22e;"></div>
<div class="a" style="left:838px;top:709px;width:2px;height:4px;background:#2ec22e;"></div>
<div class="a" style="left:880px;top:709px;width:2px;height:4px;background:#2ec22e;"></div>
<div class="a" style="left:909px;top:709px;width:2px;height:4px;background:#2ec22e;"></div>
<div class="a" style="left:915px;top:709px;width:6px;height:4px;background:#2ec22e;"></div>
<div class="a" style="left:926px;top:709px;width:30px;height:4px;background:#2ec22e;"></div>
<div class="a" style="left:1253px;top:709px;width:2px;height:4px;background:#2ec22e;"></div>
<div class="a" style="left:1284px;top:709px;width:3px;height:4px;background:#2ec22e;"></div>
<div class="a" style="left:1308px;top:709px;width:2px;height:4px;background:#2ec22e;"></div>
<div class="a" style="left:1325px;top:709px;width:2px;height:4px;background:#2ec22e;"></div>
<div class="a" style="left:1336px;top:709px;width:2px;height:4px;background:#2ec22e;"></div>
<div class="a" style="left:1342px;top:709px;width:2px;height:4px;background:#2ec22e;"></div>
<div class="a" style="left:1349px;top:709px;width:13px;height:4px;background:#2ec22e;"></div>
<div class="a" style="left:1364px;top:709px;width:12px;height:4px;background:#2ec22e;"></div>
<div class="a" style="left:1379px;top:709px;width:4px;height:4px;background:#2ec22e;"></div>
<div class="a" style="left:1387px;top:709px;width:4px;height:4px;background:#2ec22e;"></div>
<div class="a" style="left:1393px;top:709px;width:56px;height:4px;background:#2ec22e;"></div>
<div class="a" style="left:1481px;top:709px;width:2px;height:4px;background:#2ec22e;"></div>
<div class="a" style="left:1662px;top:709px;width:8px;height:4px;background:#2ec22e;"></div>
<div class="a" style="left:1676px;top:709px;width:218px;height:4px;background:#2ec22e;"></div>
<div class="a" style="left:609px;top:714px;width:1296px;height:299px;overflow:hidden;background:#262626">
<div class="a" style="left:0px;top:-7px;width:1296px;height:17px;background:#262626;"></div>
<div class="a" style="left:0px;top:9px;width:1296px;height:1px;background:#151515;"></div>
<div class="a" style="left:0px;top:10px;width:1296px;height:17px;background:#282828;"></div>
<div class="a" style="left:7px;top:10px;width:1285px;height:17px;background:#2e2e2e;"></div>
<div class="a" style="left:7px;top:11px;width:39px;height:15px;background:#2e2e2e;"></div>
<div class="a" style="left:46px;top:11px;width:1246px;height:15px;background:#753a3c;"></div>
<div class="a" style="left:0px;top:26px;width:1296px;height:1px;background:#151515;"></div>
<div class="a" style="left:0px;top:27px;width:1296px;height:17px;background:#262626;"></div>
<div class="a" style="left:0px;top:43px;width:1296px;height:1px;background:#151515;"></div>
<div class="a" style="left:0px;top:44px;width:1296px;height:17px;background:#282828;"></div>
<div class="a" style="left:7px;top:44px;width:1285px;height:17px;background:#3a3a3a;"></div>
<div class="a" style="left:7px;top:45px;width:639px;height:15px;background:#747386;"></div>
<div class="a" style="left:0px;top:60px;width:1296px;height:1px;background:#151515;"></div>
<div class="a" style="left:0px;top:61px;width:1296px;height:17px;background:#262626;"></div>
<div class="a" style="left:0px;top:77px;width:1296px;height:1px;background:#151515;"></div>
<div class="a" style="left:0px;top:78px;width:1296px;height:17px;background:#262626;"></div>
<div class="a" style="left:0px;top:94px;width:1296px;height:1px;background:#151515;"></div>
<div class="a" style="left:0px;top:95px;width:1296px;height:17px;background:#262626;"></div>
<div class="a" style="left:0px;top:111px;width:1296px;height:1px;background:#151515;"></div>
<div class="a" style="left:0px;top:112px;width:1296px;height:17px;background:#262626;"></div>
<div class="a" style="left:0px;top:128px;width:1296px;height:1px;background:#151515;"></div>
<div class="a" style="left:0px;top:129px;width:1296px;height:17px;background:#282828;"></div>
<div class="a" style="left:7px;top:129px;width:1285px;height:17px;background:#3a3a3a;"></div>
<div class="a" style="left:7px;top:130px;width:639px;height:15px;background:#984f8a;"></div>
<div class="a" style="left:0px;top:145px;width:1296px;height:1px;background:#151515;"></div>
<div class="a" style="left:0px;top:146px;width:1296px;height:17px;background:#262626;"></div>
<div class="a" style="left:0px;top:162px;width:1296px;height:1px;background:#151515;"></div>
<div class="a" style="left:0px;top:163px;width:1296px;height:17px;background:#282828;"></div>
<div class="a" style="left:7px;top:163px;width:1285px;height:17px;background:#3a3a3a;"></div>
<div class="a" style="left:7px;top:164px;width:639px;height:15px;background:#984f8a;"></div>
<div class="a" style="left:0px;top:179px;width:1296px;height:1px;background:#151515;"></div>
<div class="a" style="left:0px;top:180px;width:1296px;height:17px;background:#262626;"></div>
<div class="a" style="left:0px;top:196px;width:1296px;height:1px;background:#151515;"></div>
<div class="a" style="left:0px;top:197px;width:1296px;height:17px;background:#282828;"></div>
<div class="a" style="left:7px;top:197px;width:1285px;height:17px;background:#3a3a3a;"></div>
<div class="a" style="left:7px;top:198px;width:639px;height:15px;background:#753a3c;"></div>
<div class="a" style="left:0px;top:213px;width:1296px;height:1px;background:#151515;"></div>
<div class="a" style="left:0px;top:214px;width:1296px;height:17px;background:#282828;"></div>
<div class="a" style="left:7px;top:214px;width:1285px;height:17px;background:#3a3a3a;"></div>
<div class="a" style="left:7px;top:215px;width:639px;height:15px;background:#753a3c;"></div>
<div class="a" style="left:0px;top:230px;width:1296px;height:1px;background:#151515;"></div>
<div class="a" style="left:0px;top:231px;width:1296px;height:17px;background:#262626;"></div>
<div class="a" style="left:0px;top:247px;width:1296px;height:1px;background:#151515;"></div>
<div class="a" style="left:0px;top:248px;width:1296px;height:17px;background:#262626;"></div>
<div class="a" style="left:0px;top:264px;width:1296px;height:1px;background:#151515;"></div>
<div class="a" style="left:0px;top:265px;width:1296px;height:17px;background:#282828;"></div>
<div class="a" style="left:7px;top:265px;width:1285px;height:17px;background:#3a3a3a;"></div>
<div class="a" style="left:7px;top:266px;width:639px;height:15px;background:#747386;"></div>
<div class="a" style="left:0px;top:281px;width:1296px;height:1px;background:#151515;"></div>
<div class="a" style="left:0px;top:282px;width:1296px;height:17px;background:#282828;"></div>
<div class="a" style="left:7px;top:282px;width:1285px;height:17px;background:#3a3a3a;"></div>
<div class="a" style="left:7px;top:283px;width:639px;height:15px;background:#747386;"></div>
<div class="a" style="left:0px;top:298px;width:1296px;height:1px;background:#151515;"></div>
<div class="a" style="left:1292px;top:0px;width:4px;height:299px;background:#1d1d1d;"></div>
<svg class="a" style="left:310px;top:-2px;" width="10" height="8" viewBox="0 0 10 8"><path d="M5 0L9 7H1Z" fill="#c8c8c8"/><path d="M0 7.5H10" stroke="#c8c8c8"/></svg>
<svg class="a" style="left:439px;top:-2px;" width="10" height="8" viewBox="0 0 10 8"><path d="M5 0L9 7H1Z" fill="#c8c8c8"/><path d="M0 7.5H10" stroke="#c8c8c8"/></svg>
<svg class="a" style="left:569px;top:-2px;" width="10" height="8" viewBox="0 0 10 8"><path d="M5 0L9 7H1Z" fill="#c8c8c8"/><path d="M0 7.5H10" stroke="#c8c8c8"/></svg>
<svg class="a" style="left:743px;top:-2px;" width="10" height="8" viewBox="0 0 10 8"><path d="M5 0L9 7H1Z" fill="#c8c8c8"/><path d="M0 7.5H10" stroke="#c8c8c8"/></svg>
<svg class="a" style="left:310px;top:30px;" width="10" height="10" viewBox="0 0 10 10"><path d="M0 0H10V2L6 5L10 8V10H0V8L4 5L0 2Z" fill="#c8c8c8"/></svg>
<svg class="a" style="left:409px;top:30px;" width="10" height="10" viewBox="0 0 10 10"><path d="M0 0H10V2L6 5L10 8V10H0V8L4 5L0 2Z" fill="#c8c8c8"/></svg>
<svg class="a" style="left:342px;top:61px;" width="8" height="16" viewBox="0 0 8 16"><path d="M0.5 0.5H7.5M4 0.5V15.5M0.5 15.5H7.5" stroke="#d0d0d0" stroke-width="1.5" fill="none"/></svg>
<svg class="a" style="left:3px;top:81px;" width="10" height="10" viewBox="0 0 10 10"><path d="M5 0.5L9.5 5L5 9.5L0.5 5Z" fill="#c8c8c8"/></svg>
<svg class="a" style="left:87px;top:81px;" width="10" height="10" viewBox="0 0 10 10"><path d="M5 0.5L9.5 5L5 9.5L0.5 5Z" fill="#c8c8c8"/></svg>
<svg class="a" style="left:310px;top:81px;" width="10" height="10" viewBox="0 0 10 10"><path d="M10 0H6L1 5L6 10H10L7 5Z" fill="#c8c8c8"/></svg>
<svg class="a" style="left:408px;top:81px;" width="10" height="10" viewBox="0 0 10 10"><path d="M0 0H4L9 5L4 10H0L3 5Z" fill="#c8c8c8"/></svg>
<svg class="a" style="left:342px;top:95px;" width="8" height="16" viewBox="0 0 8 16"><path d="M0.5 0.5H7.5M4 0.5V15.5M0.5 15.5H7.5" stroke="#d0d0d0" stroke-width="1.5" fill="none"/></svg>
<svg class="a" style="left:310px;top:115px;" width="10" height="10" viewBox="0 0 10 10"><path d="M0 0H10V2L6 5L10 8V10H0V8L4 5L0 2Z" fill="#c8c8c8"/></svg>
<svg class="a" style="left:409px;top:115px;" width="10" height="10" viewBox="0 0 10 10"><path d="M0 0H10V2L6 5L10 8V10H0V8L4 5L0 2Z" fill="#c8c8c8"/></svg>
<svg class="a" style="left:256px;top:149px;" width="10" height="10" viewBox="0 0 10 10"><path d="M0 0H10V2L6 5L10 8V10H0V8L4 5L0 2Z" fill="#c8c8c8"/></svg>
<svg class="a" style="left:377px;top:149px;" width="10" height="10" viewBox="0 0 10 10"><path d="M0 0H10V2L6 5L10 8V10H0V8L4 5L0 2Z" fill="#c8c8c8"/></svg>
<svg class="a" style="left:3px;top:183px;" width="10" height="10" viewBox="0 0 10 10"><path d="M0 0H10V2L6 5L10 8V10H0V8L4 5L0 2Z" fill="#c8c8c8"/></svg>
<svg class="a" style="left:149px;top:183px;" width="10" height="10" viewBox="0 0 10 10"><path d="M0 0H10V2L6 5L10 8V10H0V8L4 5L0 2Z" fill="#c8c8c8"/></svg>
<svg class="a" style="left:342px;top:231px;" width="8" height="16" viewBox="0 0 8 16"><path d="M0.5 0.5H7.5M4 0.5V15.5M0.5 15.5H7.5" stroke="#d0d0d0" stroke-width="1.5" fill="none"/></svg>
<svg class="a" style="left:3px;top:251px;" width="10" height="10" viewBox="0 0 10 10"><path d="M5 0.5L9.5 5L5 9.5L0.5 5Z" fill="#b8b8b8"/></svg>
<svg class="a" style="left:217px;top:251px;" width="10" height="10" viewBox="0 0 10 10"><path d="M5 0.5L9.5 5L5 9.5L0.5 5Z" fill="#b8b8b8"/></svg>
</div>
<svg class="a" style="left:949px;top:676px;" width="13" height="12" viewBox="0 0 13 12"><path d="M0 2A2 2 0 0 1 2 0H11A2 2 0 0 1 13 2V7L6.5 12L0 7Z" fill="#3a8ef0"/></svg>
<div class="a" style="left:955px;top:680px;width:1px;height:333px;background:#3a8ef0;"></div>
<div class="a" style="left:955px;top:686px;width:1px;height:6px;background:#1d1d1d;"></div>
<div class="a" style="left:1905px;top:714px;width:15px;height:299px;background:#1b1b1b;"></div>
<div class="a" style="left:1905px;top:880px;width:14px;height:114px;background:#4a4a4a;"></div>
<svg class="a" style="left:1902px;top:695px;" width="16" height="16" viewBox="0 0 16 16"><path d="M2 1H14V11L8 15L2 11Z" fill="#bcbcbc"/></svg>
<svg class="a" style="left:1898px;top:716px;" width="16" height="14" viewBox="0 0 16 14"><path d="M1 7L6 2H15V12H6Z" fill="none" stroke="#bcbcbc" stroke-width="1.3"/><circle cx="8" cy="7" r="2.5" fill="none" stroke="#bcbcbc" stroke-width="1.3"/></svg>
<div class="a" style="left:0px;top:1013px;width:1920px;height:19px;background:#1d1d1d;"></div>
<svg class="a" style="left:8px;top:1016px;" width="12" height="12" viewBox="0 0 12 12"><rect x="1" y="1" width="7" height="7" fill="none" stroke="#a8a8a8" stroke-width="1.2"/><rect x="4" y="4" width="7" height="7" fill="none" stroke="#a8a8a8" stroke-width="1.2"/></svg>
<div class="a" style="left:26px;top:1014px;width:17px;height:17px;background:#3a3a3a;border-radius:3px"></div>
<svg class="a" style="left:28px;top:1016px;" width="12" height="12" viewBox="0 0 12 12"><rect x="1" y="1" width="7" height="7" fill="none" stroke="#a8a8a8" stroke-width="1.2"/><rect x="4" y="4" width="7" height="7" fill="#a8a8a8"/></svg>
<svg class="a" style="left:47px;top:1016px;" width="12" height="12" viewBox="0 0 12 12"><path d="M3 1L1 6L3 11M9 1L11 6L9 11M6 1V11" fill="none" stroke="#a8a8a8" stroke-width="1.2" stroke-dasharray="2 1"/></svg>
<svg class="a" style="left:65px;top:1016px;" width="14" height="12" viewBox="0 0 14 12"><circle cx="5" cy="5" r="3" fill="#a8a8a8"/><path d="M0 12A5 5 0 0 1 10 12Z" fill="#a8a8a8"/><path d="M10 2V9M10 9H14" stroke="#a8a8a8" stroke-width="1.2"/></svg>
<div class="t" style="left:105px;top:1016px;font-size:12px;line-height:14px;color:#c8c8c8;letter-spacing:-0.5px;">Frame Render Time:</div>
<div class="t" style="left:209px;top:1016px;font-size:12px;line-height:14px;color:#d9b55e;letter-spacing:-0.4px;font-weight:bold;">166ms</div>
<div class="t" style="left:310px;top:1015px;font-size:12px;line-height:14px;color:#c8c8c8;letter-spacing:-0.5px;">Toggle Switches / Modes</div>
<div class="a" style="left:600px;top:1013px;width:5px;height:19px;background:#1d1d1d;"></div>
<svg class="a" style="left:614px;top:1017px;" width="11" height="7" viewBox="0 0 11 7"><path d="M0 7L6 1L11 7Z" fill="#a8a8a8"/></svg>
<svg class="a" style="left:631px;top:1016px;" width="12" height="12" viewBox="0 0 12 12"><circle cx="6" cy="6" r="4.3" fill="none" stroke="#d0d0d0" stroke-width="1.6"/></svg>
<div class="a" style="left:645px;top:1021px;width:46px;height:1px;background:#555555;"></div>
<svg class="a" style="left:695px;top:1015px;" width="17" height="9" viewBox="0 0 17 9"><path d="M0 9L4 4L6 6L10 0L17 9Z" fill="#d0d0d0"/></svg>
</body></html>
